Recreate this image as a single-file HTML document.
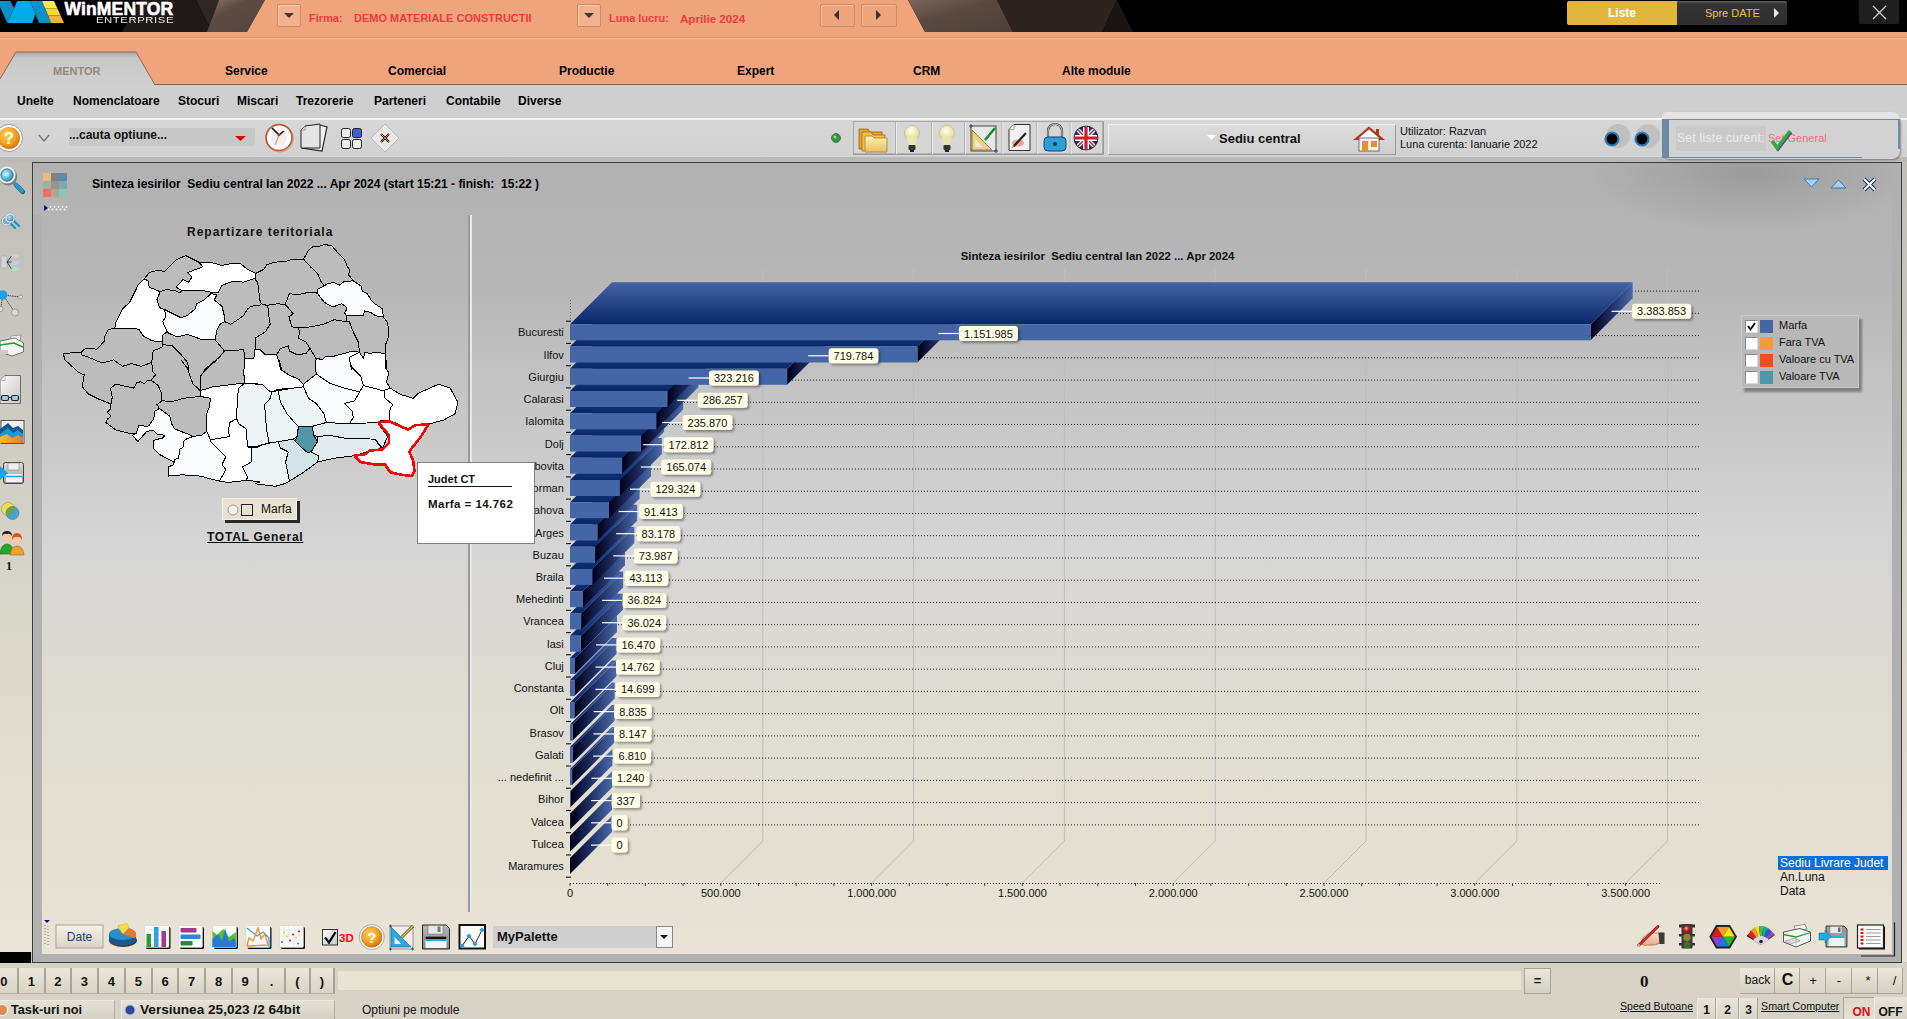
<!DOCTYPE html>
<html><head><meta charset="utf-8">
<style>
*{margin:0;padding:0;box-sizing:border-box}
html,body{width:1907px;height:1019px;overflow:hidden;background:#c8c7c2;font-family:"Liberation Sans", sans-serif}
.a{position:absolute}
.t{position:absolute;white-space:nowrap;line-height:1}
.b{font-weight:bold}
svg{position:absolute;left:0;top:0;overflow:visible}
</style></head><body>
<!-- HEADER -->
<div class="a" style="left:0;top:0;width:1907px;height:32px;background:#000"></div>
<svg width="1907" height="33" style="top:0">
  <defs>
    <linearGradient id="hb1" x1="0" y1="0" x2="1" y2="1"><stop offset="0" stop-color="#8a7264"/><stop offset="0.35" stop-color="#5c4b43"/><stop offset="1" stop-color="#54453e"/></linearGradient>
    <linearGradient id="hb2" x1="0" y1="0" x2="1" y2="1"><stop offset="0" stop-color="#7d6659"/><stop offset="0.4" stop-color="#5a4941"/><stop offset="1" stop-color="#4e4039"/></linearGradient>
  </defs>
  <polygon points="122,32 140,0 196,0 212,32" fill="#1f1a18"/>
  <polygon points="196,0 219,0 207,32 212,32" fill="#2e2623"/>
  <polygon points="219,0 265,0 247,32 207,32" fill="url(#hb1)"/>
  <polygon points="265,0 908,0 925,32 247,32" fill="#f0a47c"/>
  <polygon points="908,0 997,0 1013,32 925,32" fill="url(#hb2)"/>
  <polygon points="997,0 1117,0 1102,32 1013,32" fill="#2d2420"/>
  <polygon points="1117,0 1102,32 1133,32" fill="#1a1512"/>
  <!-- logo -->
  <polygon points="0,1.1 10.3,1.1 14,8.4 7.3,22.9 0,7" fill="#0b8fc7"/>
  <polygon points="17.3,1.1 30.1,1.1 35.3,13.9 32.3,22.9 7.3,22.9" fill="#02abe9"/>
  <polygon points="30.1,1.1 42,1.1 51,22.9 39,22.9 35.3,13.9" fill="#0b8fc7"/>
  <polygon points="42,1.1 54,1.1 57.4,8.6 45.2,8.6" fill="#fde85a"/>
  <polygon points="45.2,8.6 57.4,8.6 60.6,15.6 48.1,15.6" fill="#f6d630"/>
  <polygon points="48.1,15.6 60.6,15.6 64,22.9 51,22.9" fill="#ecb436"/>
</svg>
<div class="t b" style="left:64.5px;top:0.5px;font-size:17.5px;color:#fff;letter-spacing:0.15px;-webkit-text-stroke:0.6px #fff">WinMENTOR</div>
<div class="t" style="left:96px;top:15.5px;font-size:8.7px;color:#ececec;letter-spacing:0.45px;transform:scaleX(1.3);transform-origin:0 0">ENTERPRISE</div>

<!-- header combos -->
<div class="a" style="left:277px;top:4px;width:24px;height:23px;background:#f3b08c;border:1px solid #c98c6c;border-radius:2px;box-shadow:inset 1px 1px 0 #f8c8aa"></div>
<svg width="10" height="6" style="left:284px;top:13px"><polygon points="0,0 10,0 5,5" fill="#3a3a3a"/></svg>
<div class="t b" style="left:309px;top:12.5px;font-size:11px;color:#ee3c3c">Firma:</div>
<div class="t b" style="left:354px;top:12.5px;font-size:11px;color:#ee3c3c">DEMO MATERIALE CONSTRUCTII</div>
<div class="a" style="left:577px;top:4px;width:24px;height:23px;background:#f3b08c;border:1px solid #c98c6c;border-radius:2px;box-shadow:inset 1px 1px 0 #f8c8aa"></div>
<svg width="10" height="6" style="left:584px;top:13px"><polygon points="0,0 10,0 5,5" fill="#3a3a3a"/></svg>
<div class="t b" style="left:609px;top:12.5px;font-size:11px;color:#ee3c3c">Luna lucru:</div>
<div class="t b" style="left:680px;top:12.6px;font-size:11.6px;color:#ee3c3c">Aprilie 2024</div>
<div class="a" style="left:820px;top:4px;width:35px;height:23px;background:#f0a47c;border:1px solid #c98c6c;border-radius:2px;box-shadow:inset 1px 1px 0 #f6bc9c"></div>
<svg width="6" height="10" style="left:834px;top:10px"><polygon points="5,0 5,10 0,5" fill="#333"/></svg>
<div class="a" style="left:861px;top:4px;width:36px;height:23px;background:#f0a47c;border:1px solid #c98c6c;border-radius:2px;box-shadow:inset 1px 1px 0 #f6bc9c"></div>
<svg width="6" height="10" style="left:876px;top:10px"><polygon points="0,0 0,10 5,5" fill="#333"/></svg>

<!-- Liste / Spre DATE -->
<div class="a" style="left:1567px;top:1px;width:110px;height:24px;background:#e1b53e;border-radius:2px 0 0 2px"></div>
<div class="t b" style="left:1567px;top:7px;width:110px;text-align:center;font-size:12px;color:#fff">Liste</div>
<div class="a" style="left:1677px;top:1px;width:110px;height:24px;background:linear-gradient(#5a5a5a,#333 15%,#2e2e2e);border-radius:0 2px 2px 0"></div>
<div class="t" style="left:1705px;top:7.5px;font-size:11px;color:#eac24a">Spre DATE</div>
<svg width="6" height="10" style="left:1774px;top:8px"><polygon points="0,0 0,10 5,5" fill="#e8e8e8"/></svg>
<div class="a" style="left:1859px;top:0;width:40px;height:24px;background:#1f1f1f;border-radius:0 0 2px 2px"></div>
<svg width="16" height="16" style="left:1872px;top:5px"><path d="M1,1 L14,14 M14,1 L1,14" stroke="#cfcfcf" stroke-width="1.3"/></svg>

<!-- orange band -->
<div class="a" style="left:0;top:32px;width:1907px;height:53px;background:#f0a47c"></div>
<div class="a" style="left:0;top:37px;width:1907px;height:1px;background:#d7916d"></div>
<div class="a" style="left:0;top:38px;width:1907px;height:1px;background:#f5b898"></div>
<div class="a" style="left:0;top:84px;width:1907px;height:1.5px;background:#80604e"></div>
<svg width="160" height="36" style="left:0;top:51px">
  <defs><linearGradient id="tabg" x1="0" y1="0" x2="0" y2="1"><stop offset="0" stop-color="#a8a8a8"/><stop offset="0.18" stop-color="#c8c8c8"/><stop offset="1" stop-color="#cfcfcf"/></linearGradient></defs>
  <polygon points="16,1 136,1 155,34 0,34 0,28" fill="url(#tabg)"/>
  <path d="M0,28 L16,1 L136,1 L155,34" fill="none" stroke="#8c6a58" stroke-width="1"/>
</svg>
<div class="t b" style="left:53px;top:66px;font-size:11px;color:#8f8a80">MENTOR</div>
<div class="t b" style="left:225px;top:65px;font-size:12px;color:#000">Service</div>
<div class="t b" style="left:388px;top:65px;font-size:12px;color:#000">Comercial</div>
<div class="t b" style="left:559px;top:65px;font-size:12px;color:#000">Productie</div>
<div class="t b" style="left:737px;top:65px;font-size:12px;color:#000">Expert</div>
<div class="t b" style="left:913px;top:65px;font-size:12px;color:#000">CRM</div>
<div class="t b" style="left:1062px;top:65px;font-size:12px;color:#000">Alte module</div>

<!-- submenu -->
<div class="a" style="left:0;top:85px;width:1907px;height:33px;background:#cfcfcf"></div>
<div class="a" style="left:0;top:118px;width:1907px;height:2px;background:#f2f2f2"></div>
<div class="t b" style="left:17px;top:95px;font-size:12px">Unelte</div>
<div class="t b" style="left:73px;top:95px;font-size:12px">Nomenclatoare</div>
<div class="t b" style="left:178px;top:95px;font-size:12px">Stocuri</div>
<div class="t b" style="left:237px;top:95px;font-size:12px">Miscari</div>
<div class="t b" style="left:296px;top:95px;font-size:12px">Trezorerie</div>
<div class="t b" style="left:374px;top:95px;font-size:12px">Parteneri</div>
<div class="t b" style="left:446px;top:95px;font-size:12px">Contabile</div>
<div class="t b" style="left:518px;top:95px;font-size:12px">Diverse</div>

<!-- TOOLBAR -->
<div class="a" style="left:0;top:120px;width:1907px;height:37px;background:linear-gradient(#d6d6d6,#d2d2d2)"></div>
<div class="a" style="left:0;top:157px;width:1907px;height:5px;background:#b9b9b7"></div>
<svg width="420" height="40" style="left:0;top:118px">
  <defs>
    <radialGradient id="hq" cx="0.4" cy="0.35" r="0.7"><stop offset="0" stop-color="#ffd15a"/><stop offset="0.6" stop-color="#f0a020"/><stop offset="1" stop-color="#c87010"/></radialGradient>
  </defs>
  <circle cx="9" cy="20" r="13.5" fill="#fff" stroke="#9a9a9a" stroke-width="1"/>
  <circle cx="9" cy="20" r="11" fill="url(#hq)"/>
  <text x="9" y="26" font-family="Liberation Sans" font-weight="bold" font-size="16" fill="#fff" text-anchor="middle">?</text>
  <path d="M39,17 L44,23 L49,17" fill="none" stroke="#707070" stroke-width="1.2"/>
  <rect x="69" y="10" width="186" height="18" fill="#c8c8c8"/>
  <polygon points="235,18 246,18 240.5,23" fill="#e00000"/>
  <!-- clock -->
  <circle cx="279" cy="19.5" r="13" fill="#fff" stroke="#c8582a" stroke-width="1.6"/>
  <circle cx="280" cy="20.5" r="13.5" fill="none" stroke="#5a3a2a" stroke-width="0.6" opacity="0.5"/>
  <circle cx="279" cy="19.5" r="8" fill="#efefef"/>
  <path d="M272,10 L279,17 L284,13" fill="none" stroke="#111" stroke-width="1.6"/>
  <path d="M279,17 L275,27" stroke="#e06030" stroke-width="0.8"/>
  <circle cx="279" cy="17" r="1.3" fill="#d02020"/>
  <!-- docs -->
  <polygon points="307,10 320,7 327,9 322,33 302,30" fill="#f0f0f0" stroke="#222" stroke-width="1.2"/>
  <polygon points="305,8 320,6 320,30 301,30 301,12" fill="#e4e4e4" stroke="#222" stroke-width="1"/>
  <polygon points="301,12 305,8 305,12" fill="#fff" stroke="#555" stroke-width="0.6"/>
  <!-- grid -->
  <rect x="341.5" y="10.5" width="9" height="9" rx="2" fill="#eee" stroke="#222" stroke-width="1"/>
  <rect x="352.5" y="10.5" width="9" height="9" rx="2" fill="#3a5fd8" stroke="#222" stroke-width="1"/>
  <rect x="341.5" y="21.5" width="9" height="9" rx="2" fill="#eee" stroke="#222" stroke-width="1"/>
  <rect x="352.5" y="21.5" width="9" height="9" rx="2" fill="#eee" stroke="#222" stroke-width="1"/>
  <!-- diamond -->
  <polygon points="385,6 399,20 385,34 371,20" fill="#e8e8e8" stroke="#bbb" stroke-width="1"/>
  <path d="M381,16 L389,24 M389,16 L381,24" stroke="#111" stroke-width="2.2"/>
  <path d="M381,16 L389,24 M389,16 L381,24" stroke="#f0a020" stroke-width="0.8"/>
</svg>
<div class="t b" style="left:69px;top:129px;font-size:12px;color:#111">...cauta optiune...</div>

<!-- center group -->
<svg width="560" height="42" style="left:820px;top:116px">
  <defs>
    <radialGradient id="bulb" cx="0.45" cy="0.35" r="0.6"><stop offset="0" stop-color="#fffde8"/><stop offset="1" stop-color="#e2dc98"/></radialGradient>
    <linearGradient id="fold" x1="0" y1="0" x2="0" y2="1"><stop offset="0" stop-color="#fff2b0"/><stop offset="1" stop-color="#e8c060"/></linearGradient>
    <radialGradient id="ukb" cx="0.5" cy="0.5" r="0.5"><stop offset="0.8" stop-color="#233a8a"/><stop offset="1" stop-color="#101c50"/></radialGradient>
  </defs>
  <circle cx="16" cy="22" r="4.5" fill="#2b9a3b" stroke="#6a6a6a" stroke-width="1"/>
  <circle cx="15" cy="21" r="1.5" fill="#8fe08f"/>
  <rect x="33.5" y="5.5" width="250" height="33" fill="#d6d6d6" stroke="#a8a8a8"/>
  <path d="M34,38 L283,38 L283,6" stroke="#8a8a8a" fill="none"/>
  <path d="M75.5,6 V38 M111.5,6 V38 M144.5,6 V38 M182,6 V38 M216.8,6 V38 M250.2,6 V38" stroke="#b0b0b0"/>
  <path d="M76.5,6 V38 M112.5,6 V38 M145.5,6 V38 M183,6 V38 M217.8,6 V38 M251.2,6 V38" stroke="#ececec"/>
  <!-- folder -->
  <path d="M39,13 h9 l2,3 h12 v17 h-23z" fill="#e8a030" stroke="#a06010" stroke-width="0.8"/>
  <path d="M42,16 h9 l2,3 h12 v16 h-23z" fill="#f0c050" stroke="#a07020" stroke-width="0.8"/>
  <path d="M45,20 h7 l2,2 h13 v14 h-22z" fill="url(#fold)" stroke="#a08030" stroke-width="0.8"/>
  <!-- bulbs -->
  <g>
    <circle cx="92" cy="17" r="7.5" fill="url(#bulb)" stroke="#b8b070" stroke-width="0.6"/>
    <path d="M87,22 L89,29 H95 L97,22z" fill="#ebe5b0"/>
    <rect x="88.5" y="29" width="7" height="5" rx="1" fill="#333"/>
    <rect x="90" y="34" width="4" height="2" fill="#222"/>
  </g>
  <g>
    <circle cx="127" cy="17" r="7.5" fill="url(#bulb)" stroke="#b8b070" stroke-width="0.6"/>
    <path d="M122,22 L124,29 H130 L132,22z" fill="#ebe5b0"/>
    <rect x="123.5" y="29" width="7" height="5" rx="1" fill="#333"/>
    <rect x="125" y="34" width="4" height="2" fill="#222"/>
  </g>
  <!-- ruler -->
  <rect x="151" y="10" width="25" height="25" fill="#e8e8e8" stroke="#444" stroke-width="1"/>
  <polygon points="152,14 152,34 172,34" fill="#eed27a" stroke="#8a7020" stroke-width="0.8"/>
  <polygon points="155,23 155,31 163,31" fill="#e8e8e8"/>
  <path d="M165,24 L175,12" stroke="#1a8a2a" stroke-width="2.5"/>
  <path d="M149,10 h4 M151,8 v4 M174,35 h4 M176,33 v4" stroke="#2a4a6a" stroke-width="1"/>
  <!-- doc pen -->
  <polygon points="194,8.5 210,8.5 210,34.5 189,34.5 189,13.5" fill="#f2f2f2" stroke="#333" stroke-width="1"/>
  <polygon points="189,13.5 194,8.5 194,13.5" fill="#fff" stroke="#777" stroke-width="0.6"/>
  <ellipse cx="198" cy="27" rx="6" ry="3.5" fill="#e8a090"/>
  <path d="M193.5,30.5 L206,17" stroke="#222" stroke-width="2.2"/>
  <path d="M192,32 L194,30" stroke="#f09030" stroke-width="1.5"/>
  <!-- lock -->
  <path d="M228,22 V15 a7,7 0 0 1 14,0 V22" fill="none" stroke="#333" stroke-width="2.2"/>
  <path d="M228,22 V15 a7,7 0 0 1 14,0 V22" fill="none" stroke="#d8d8d8" stroke-width="1"/>
  <rect x="224" y="21" width="22" height="14" rx="4" fill="#2aa0d8" stroke="#17407a" stroke-width="1"/>
  <circle cx="235" cy="28" r="2" fill="#333"/>
  <!-- UK -->
  <circle cx="266" cy="22" r="12" fill="url(#ukb)"/>
  <clipPath id="ukc"><circle cx="266" cy="22" r="11.5"/></clipPath>
  <g clip-path="url(#ukc)">
    <path d="M254,10 L278,34 M278,10 L254,34" stroke="#fff" stroke-width="4"/>
    <path d="M254,10 L278,34 M278,10 L254,34" stroke="#c8202a" stroke-width="1.5"/>
    <path d="M266,9 V35 M253,22 H279" stroke="#fff" stroke-width="6"/>
    <path d="M266,9 V35 M253,22 H279" stroke="#c8202a" stroke-width="3.2"/>
  </g>
  <circle cx="266" cy="22" r="12" fill="none" stroke="#333" stroke-width="0.8"/>
</svg>
<!-- sediu central -->
<div class="a" style="left:1108px;top:124px;width:288px;height:31px;background:linear-gradient(#dcdcdc,#cfcfcf);border:1px solid #9a9a9a;border-top-color:#eee;border-left-color:#eee"></div>
<svg width="10" height="6" style="left:1207px;top:135px"><polygon points="0,0 9,0 4.5,5" fill="#fff"/></svg>
<div class="t b" style="left:1219px;top:132px;font-size:13px;color:#111">Sediu central</div>
<svg width="34" height="30" style="left:1353px;top:124px">
  <polygon points="3,15 16,4 29,15" fill="#fff" stroke="#b03818" stroke-width="2.2"/>
  <rect x="6" y="14" width="20" height="13" fill="#f8f4ea" stroke="#555" stroke-width="0.8"/>
  <rect x="9" y="17" width="6" height="10" fill="#e8902a"/>
  <rect x="18" y="17" width="6" height="6" fill="#e8902a"/>
  <rect x="23" y="5" width="3" height="6" fill="#b03818"/>
</svg>
<div class="t" style="left:1400px;top:126px;font-size:11px;color:#111">Utilizator: Razvan</div>
<div class="t" style="left:1400px;top:139px;font-size:11px;color:#111">Luna curenta: Ianuarie 2022</div>
<svg width="60" height="30" style="left:1598px;top:124px">
  <circle cx="20" cy="12" r="12" fill="#c0c0c0"/>
  <circle cx="50" cy="12" r="12" fill="#c0c0c0"/>
  <circle cx="14" cy="15" r="6.5" fill="#000" stroke="#2a7ab8" stroke-width="2.2"/>
  <circle cx="44" cy="15" r="6.5" fill="#000" stroke="#2a7ab8" stroke-width="2.2"/>
</svg>
<!-- set liste popup -->
<div class="a" style="left:1662px;top:112px;width:238px;height:47px;background:#d2d2d2;border-radius:8px 11px 8px 8px;box-shadow:1px 1px 2px rgba(0,0,0,0.35)"></div>
<div class="a" style="left:1662px;top:112px;width:238px;height:7px;background:#e4e4e4;border-radius:8px 11px 0 0"></div>
<div class="a" style="left:1662px;top:119px;width:238px;height:1px;background:#6a8ea8"></div>
<div class="a" style="left:1662px;top:119px;width:7px;height:39px;background:#6a8aa2"></div>
<div class="a" style="left:1898px;top:119px;width:1.5px;height:30px;background:#6a8ea8"></div>
<div class="a" style="left:1662px;top:157px;width:200px;height:1px;background:#6a8aa2"></div>
<div class="a" style="left:1676px;top:126px;width:90px;height:25px;background:#cacaca"></div>
<div class="t" style="left:1677px;top:132px;font-size:12px;color:#ececec;letter-spacing:0.3px">Set liste curent:</div>
<div class="t" style="left:1768px;top:132.5px;font-size:11px;color:#f07080">Set General</div>
<svg width="24" height="24" style="left:1769px;top:127px">
  <path d="M3,14 L8,21 L21,4" fill="none" stroke="#3a5a8a" stroke-width="3.2" transform="translate(1,1)"/>
  <path d="M3,14 L8,21 L21,4" fill="none" stroke="#3aa83a" stroke-width="3.2"/>
</svg>

<!-- WINDOW -->
<div class="a" style="left:0;top:162px;width:32px;height:790px;background:linear-gradient(#bebdb8,#d6d3c8 50%,#ebe6d7)"></div>
<div class="a" style="left:1902px;top:162px;width:5px;height:800px;background:linear-gradient(#bebdb8,#d6d3c8 50%,#e6e1d2)"></div>
<div class="a" style="left:32px;top:162px;width:1870px;height:801px;background:#3c3c3c"></div>
<div class="a" style="left:33px;top:163px;width:1868px;height:799px;background:linear-gradient(#b1b1b1 0px,#b4b4b4 60px,#b7b7b7 130px,#c4c4c4 227px,#d6d6d6 387px,#dedbd2 537px,#e4e0d1 690px,#e9e4d5 799px)"></div>
<div class="a" style="left:33px;top:954px;width:1868px;height:8px;background:#b0b0b0"></div>
<div class="a" style="left:1892px;top:163px;width:9px;height:799px;background:#b0b0b0"></div>
<div class="a" style="left:33px;top:215px;width:9px;height:739px;background:linear-gradient(#b0b0b0,#b2b2b2)"></div>

<div class="a" style="left:1560px;top:163px;width:332px;height:110px;background:radial-gradient(ellipse 160px 60px at 190px 10px,rgba(0,0,0,0.13),rgba(0,0,0,0) 100%)"></div>
<svg width="30" height="45" style="left:42px;top:172px"><rect x="1" y="1" width="8" height="8" fill="#e8bb7a"/><rect x="9" y="1" width="8" height="8" fill="#808080"/><rect x="17" y="1" width="8" height="8" fill="#5a8ab0"/><rect x="1" y="9" width="8" height="8" fill="#9cb0a8"/><rect x="9" y="9" width="8" height="8" fill="#9a9488"/><rect x="17" y="9" width="8" height="8" fill="#7aaab0"/><rect x="1" y="17" width="8" height="8" fill="#ee6e66"/><rect x="9" y="17" width="8" height="8" fill="#aca696"/><rect x="17" y="17" width="8" height="8" fill="#8ec4bc"/><polygon points="2,33 2,39 6,36" fill="#101080"/><circle cx="8.5" cy="35" r="0.9" fill="#f4f4f4"/><circle cx="6.5" cy="37.5" r="0.9" fill="#f4f4f4"/><circle cx="12.5" cy="35" r="0.9" fill="#f4f4f4"/><circle cx="10.5" cy="37.5" r="0.9" fill="#f4f4f4"/><circle cx="16.5" cy="35" r="0.9" fill="#f4f4f4"/><circle cx="14.5" cy="37.5" r="0.9" fill="#f4f4f4"/><circle cx="20.5" cy="35" r="0.9" fill="#f4f4f4"/><circle cx="18.5" cy="37.5" r="0.9" fill="#f4f4f4"/><circle cx="24.5" cy="35" r="0.9" fill="#f4f4f4"/><circle cx="22.5" cy="37.5" r="0.9" fill="#f4f4f4"/></svg>
<div class="t b" style="left:92px;top:178px;font-size:12px;color:#000">Sinteza iesirilor&nbsp; Sediu central Ian 2022 ... Apr 2024 (start 15:21 - finish:&nbsp; 15:22 )</div>
<svg width="80" height="20" style="left:1800px;top:176px">
<polygon points="4,3 19,3 11.5,11" fill="#a8cff0" stroke="#3a78b8" stroke-width="1"/>
<polygon points="31,12 46,12 38.5,4" fill="#a8cff0" stroke="#3a78b8" stroke-width="1"/>
<path d="M64,3 L75,14 M75,3 L64,14" stroke="#1a2a5a" stroke-width="4"/>
<path d="M64,3 L75,14 M75,3 L64,14" stroke="#fff" stroke-width="2"/>
</svg>
<div class="a" style="left:468px;top:215px;width:2px;height:697px;background:#9a9a9a"></div>
<div class="a" style="left:470px;top:215px;width:2px;height:697px;background:#e8e8e8"></div>
<!-- SIDEBAR ICONS -->
<svg width="32" height="420" style="left:0;top:160px">
  <defs>
    <radialGradient id="lens" cx="0.4" cy="0.4" r="0.6"><stop offset="0" stop-color="#b8e4f0"/><stop offset="0.7" stop-color="#5ab4d0"/><stop offset="1" stop-color="#2a88b0"/></radialGradient>
    <linearGradient id="fl" x1="0" y1="0" x2="0" y2="1"><stop offset="0" stop-color="#ddd"/><stop offset="1" stop-color="#999"/></linearGradient>
    <linearGradient id="docg" x1="0" y1="0" x2="1" y2="1"><stop offset="0" stop-color="#fafafa"/><stop offset="1" stop-color="#c8c8c8"/></linearGradient>
    <linearGradient id="areao" x1="0" y1="0" x2="1" y2="0"><stop offset="0" stop-color="#f8c020"/><stop offset="1" stop-color="#e87830"/></linearGradient>
  </defs>
  <!-- big magnifier -->
  <path d="M15,24 L22,31" stroke="#222" stroke-width="4.5" stroke-linecap="round" transform="translate(0.8,0.8)" opacity="0.7"/>
  <path d="M15,24 L22,31" stroke="#1aa0e0" stroke-width="3.6" stroke-linecap="round"/>
  <circle cx="7.5" cy="15.5" r="9" fill="#555" opacity="0.6" transform="translate(0.7,0.9)"/>
  <circle cx="7" cy="15" r="8.6" fill="#f0f0f0"/>
  <circle cx="7" cy="15" r="6.2" fill="url(#lens)" stroke="#1a7aa0" stroke-width="0.8"/>
  <ellipse cx="6" cy="14" rx="3" ry="2" fill="#d8f0f8" opacity="0.6"/>
  <!-- small magnifiers -->
  <path d="M10,63 L15,68 M14,61 L19,66" stroke="#1a98d8" stroke-width="2.4" stroke-linecap="round"/>
  <circle cx="6.5" cy="61" r="5" fill="#eee" stroke="#777" stroke-width="0.5"/>
  <circle cx="6.5" cy="61" r="3.5" fill="#6ab0d0"/>
  <circle cx="10" cy="58" r="5" fill="#f4f4f4" stroke="#777" stroke-width="0.5"/>
  <circle cx="10" cy="58" r="3.5" fill="url(#lens)"/>
  <!-- tree list -->
  <rect x="1" y="96" width="6" height="12" rx="1" fill="#d4d4e0" stroke="#999" stroke-width="0.5"/>
  <path d="M7,102 L11.5,96 M7,102 H11.5 M7,102 L11.5,109" fill="none" stroke="#222" stroke-width="0.8"/>
  <rect x="11.5" y="94" width="8" height="4" rx="2" fill="#e4c4d4"/>
  <rect x="11.5" y="101" width="8" height="4" rx="2" fill="#b8d4e8"/>
  <rect x="11.5" y="107" width="8" height="4" rx="2" fill="#b8dcc0"/>
  <!-- network -->
  <path d="M3,135 L20.5,137 M3,135 L0.5,149 M3,135 L15,152.5" stroke="#333" stroke-width="0.9" stroke-dasharray="1.5,0.8"/>
  <circle cx="2.5" cy="135" r="4.8" fill="#18a0e8"/>
  <circle cx="20.5" cy="137" r="2" fill="#e0e0e0" stroke="#777" stroke-width="0.6"/>
  <circle cx="0.5" cy="149" r="2.6" fill="#e0e0e0" stroke="#777" stroke-width="0.6"/>
  <circle cx="15" cy="152.5" r="3.6" fill="#d8d8d8" stroke="#777" stroke-width="0.6"/>
  <!-- printer -->
  <polygon points="11,176 21,175 20,181 10,182" fill="#f4f4f4" stroke="#777" stroke-width="0.6"/>
  <polygon points="0,181 15,178 23.5,183 23.5,192 12,196 0,192" fill="#f4f4f4" stroke="#555" stroke-width="0.8"/>
  <path d="M0,185 L14,183 L23,187" fill="none" stroke="#20a020" stroke-width="1.4"/>
  <rect x="0" y="190" width="8" height="4" fill="#ccc"/>
  <!-- doc glasses -->
  <polygon points="5,215.5 20.5,215.5 20.5,243.5 0,243.5 0,220.5" fill="url(#docg)" stroke="#555" stroke-width="0.8"/>
  <polygon points="0,220.5 5,215.5 5,220.5" fill="#fff" stroke="#888" stroke-width="0.5"/>
  <rect x="1.5" y="235.5" width="7" height="5" rx="1.5" fill="#9cd0e0" stroke="#222" stroke-width="1.2"/>
  <rect x="11.5" y="235.5" width="7" height="5" rx="1.5" fill="#9cd0e0" stroke="#222" stroke-width="1.2"/>
  <path d="M8.5,237.5 H11.5" stroke="#222" stroke-width="1"/>
  <!-- area chart -->
  <rect x="1" y="260.5" width="23" height="23" fill="#f0f0f0" stroke="#333" stroke-width="0.8"/>
  <polygon points="0,272 8,266 13,271 18,269 23,273 23,283 0,283" fill="#1a98d8"/>
  <polygon points="0,269 8,263 13,268 18,266 23,270 23,274 18,270 13,273 8,268 0,274" fill="#0e5a90"/>
  <polygon points="0,277 7,274 12,278 18,275 23,278 23,283 0,283" fill="url(#areao)"/>
  <!-- floppy -->
  <rect x="3.5" y="302.5" width="20" height="21" rx="2" fill="url(#fl)" stroke="#333" stroke-width="0.9"/>
  <rect x="8" y="303" width="11" height="7" fill="#eee" stroke="#777" stroke-width="0.5"/>
  <rect x="6" y="314" width="16" height="8" fill="#f4f4f4"/>
  <path d="M6,316.5 H22" stroke="#20a0e0" stroke-width="1.5"/>
  <path d="M0,306 L8,313 L0,320z" fill="#1aa0e0"/>
  <!-- circles -->
  <circle cx="8" cy="349" r="6.5" fill="#f0e050" stroke="#888" stroke-width="0.6"/>
  <circle cx="12.5" cy="353" r="6.5" fill="#28a0d8" opacity="0.85" stroke="#555" stroke-width="0.6"/>
  <path d="M6.5,353 A6.5,6.5 0 0 1 14,346.5 A6.5,6.5 0 0 1 8,355.5z" fill="#70a040" opacity="0.9"/>
  <!-- people -->
  <path d="M0,394 Q1,384 7,384 Q13,384 14,394z" fill="#20a828" stroke="#186818" stroke-width="0.6"/>
  <circle cx="7" cy="377" r="5" fill="#f4c8a8"/>
  <path d="M2,376 Q2,371 7,371 Q12,371 12,376 Q10,373 7,374 Q4,373 2,376z" fill="#222"/>
  <path d="M10,395 Q11,386 17,386 Q23,386 24,395z" fill="#f0a030" stroke="#a06010" stroke-width="0.6"/>
  <circle cx="17" cy="380" r="5" fill="#f4c8a8"/>
  <path d="M12,380 Q12,373 17,373 Q22,373 22,380 Q20,376 17,377 Q14,376 12,380z" fill="#e05018"/>
</svg>
<div class="t b" style="left:6px;top:560px;font-size:12px;font-family:'Liberation Serif',serif;color:#111">1</div>

<svg width="1907" height="1019" style="left:0;top:0">
<defs>
<linearGradient id="topg" x1="0" y1="0" x2="0" y2="1"><stop offset="0" stop-color="#4464a4"/><stop offset="1" stop-color="#08266a"/></linearGradient>
<linearGradient id="sideg" x1="0" y1="0" x2="1" y2="0"><stop offset="0" stop-color="#000018"/><stop offset="0.45" stop-color="#1c2c60"/><stop offset="1" stop-color="#4a68a8"/></linearGradient>
<filter id="lsh" x="-20%" y="-20%" width="150%" height="160%"><feGaussianBlur in="SourceAlpha" stdDeviation="1"/><feOffset dx="1.5" dy="2" result="o"/><feComponentTransfer><feFuncA type="linear" slope="0.35"/></feComponentTransfer><feMerge><feMergeNode/><feMergeNode in="SourceGraphic"/></feMerge></filter>
</defs>
<text x="1097.5" y="260" font-family="Liberation Sans" font-weight="bold" font-size="11.4" text-anchor="middle" fill="#111">Sinteza iesirilor&#160; Sediu central Ian 2022 ... Apr 2024</text>
<line x1="762.8" y1="269" x2="762.8" y2="841" stroke="#bdbdbd" stroke-width="1"/>
<line x1="720.8" y1="883" x2="762.8" y2="841" stroke="#bbbbbb" stroke-width="1"/>
<line x1="913.6" y1="269" x2="913.6" y2="841" stroke="#bdbdbd" stroke-width="1"/>
<line x1="871.6" y1="883" x2="913.6" y2="841" stroke="#bbbbbb" stroke-width="1"/>
<line x1="1064.4" y1="269" x2="1064.4" y2="841" stroke="#bdbdbd" stroke-width="1"/>
<line x1="1022.4" y1="883" x2="1064.4" y2="841" stroke="#bbbbbb" stroke-width="1"/>
<line x1="1215.2" y1="269" x2="1215.2" y2="841" stroke="#bdbdbd" stroke-width="1"/>
<line x1="1173.2" y1="883" x2="1215.2" y2="841" stroke="#bbbbbb" stroke-width="1"/>
<line x1="1366.0" y1="269" x2="1366.0" y2="841" stroke="#bdbdbd" stroke-width="1"/>
<line x1="1324.0" y1="883" x2="1366.0" y2="841" stroke="#bbbbbb" stroke-width="1"/>
<line x1="1516.8" y1="269" x2="1516.8" y2="841" stroke="#bdbdbd" stroke-width="1"/>
<line x1="1474.8" y1="883" x2="1516.8" y2="841" stroke="#bbbbbb" stroke-width="1"/>
<line x1="1667.6" y1="269" x2="1667.6" y2="841" stroke="#bdbdbd" stroke-width="1"/>
<line x1="1625.6" y1="883" x2="1667.6" y2="841" stroke="#bbbbbb" stroke-width="1"/>
<line x1="612" y1="291.1" x2="1700" y2="291.1" stroke="#222" stroke-width="1" stroke-dasharray="1,2"/>
<line x1="612" y1="313.3" x2="1700" y2="313.3" stroke="#222" stroke-width="1" stroke-dasharray="1,2"/>
<line x1="612" y1="335.6" x2="1700" y2="335.6" stroke="#222" stroke-width="1" stroke-dasharray="1,2"/>
<line x1="612" y1="357.8" x2="1700" y2="357.8" stroke="#222" stroke-width="1" stroke-dasharray="1,2"/>
<line x1="612" y1="380.1" x2="1700" y2="380.1" stroke="#222" stroke-width="1" stroke-dasharray="1,2"/>
<line x1="612" y1="402.3" x2="1700" y2="402.3" stroke="#222" stroke-width="1" stroke-dasharray="1,2"/>
<line x1="612" y1="424.5" x2="1700" y2="424.5" stroke="#222" stroke-width="1" stroke-dasharray="1,2"/>
<line x1="612" y1="446.8" x2="1700" y2="446.8" stroke="#222" stroke-width="1" stroke-dasharray="1,2"/>
<line x1="612" y1="469.0" x2="1700" y2="469.0" stroke="#222" stroke-width="1" stroke-dasharray="1,2"/>
<line x1="612" y1="491.3" x2="1700" y2="491.3" stroke="#222" stroke-width="1" stroke-dasharray="1,2"/>
<line x1="612" y1="513.5" x2="1700" y2="513.5" stroke="#222" stroke-width="1" stroke-dasharray="1,2"/>
<line x1="612" y1="535.7" x2="1700" y2="535.7" stroke="#222" stroke-width="1" stroke-dasharray="1,2"/>
<line x1="612" y1="558.0" x2="1700" y2="558.0" stroke="#222" stroke-width="1" stroke-dasharray="1,2"/>
<line x1="612" y1="580.2" x2="1700" y2="580.2" stroke="#222" stroke-width="1" stroke-dasharray="1,2"/>
<line x1="612" y1="602.5" x2="1700" y2="602.5" stroke="#222" stroke-width="1" stroke-dasharray="1,2"/>
<line x1="612" y1="624.7" x2="1700" y2="624.7" stroke="#222" stroke-width="1" stroke-dasharray="1,2"/>
<line x1="612" y1="646.9" x2="1700" y2="646.9" stroke="#222" stroke-width="1" stroke-dasharray="1,2"/>
<line x1="612" y1="669.2" x2="1700" y2="669.2" stroke="#222" stroke-width="1" stroke-dasharray="1,2"/>
<line x1="612" y1="691.4" x2="1700" y2="691.4" stroke="#222" stroke-width="1" stroke-dasharray="1,2"/>
<line x1="612" y1="713.7" x2="1700" y2="713.7" stroke="#222" stroke-width="1" stroke-dasharray="1,2"/>
<line x1="612" y1="735.9" x2="1700" y2="735.9" stroke="#222" stroke-width="1" stroke-dasharray="1,2"/>
<line x1="612" y1="758.1" x2="1700" y2="758.1" stroke="#222" stroke-width="1" stroke-dasharray="1,2"/>
<line x1="612" y1="780.4" x2="1700" y2="780.4" stroke="#222" stroke-width="1" stroke-dasharray="1,2"/>
<line x1="612" y1="802.6" x2="1700" y2="802.6" stroke="#222" stroke-width="1" stroke-dasharray="1,2"/>
<line x1="612" y1="824.9" x2="1700" y2="824.9" stroke="#222" stroke-width="1" stroke-dasharray="1,2"/>
<line x1="570.5" y1="300" x2="570.5" y2="322" stroke="#666" stroke-width="1" stroke-dasharray="1,2"/>
<polygon points="570.0,858.1 570.0,874.1 612.0,832.1 612.0,816.1" fill="url(#sideg)"/>
<polygon points="570.0,835.8 570.0,851.8 612.0,809.8 612.0,793.8" fill="url(#sideg)"/>
<polygon points="570.1,813.6 570.1,829.6 612.1,787.6 612.1,771.6" fill="url(#sideg)"/>
<polygon points="570.0,813.6 570.1,813.6 612.1,771.6 612.0,771.6" fill="url(#topg)"/>
<rect x="570.0" y="813.6" width="0.1" height="16.0" fill="#4566a6"/>
<polygon points="570.4,791.3 570.4,807.3 612.4,765.3 612.4,749.3" fill="url(#sideg)"/>
<polygon points="570.0,791.3 570.4,791.3 612.4,749.3 612.0,749.3" fill="url(#topg)"/>
<rect x="570.0" y="791.3" width="0.4" height="16.0" fill="#4566a6"/>
<polygon points="572.1,769.1 572.1,785.1 614.1,743.1 614.1,727.1" fill="url(#sideg)"/>
<polygon points="570.0,769.1 572.1,769.1 614.1,727.1 612.0,727.1" fill="url(#topg)"/>
<rect x="570.0" y="769.1" width="2.1" height="16.0" fill="#4566a6"/>
<polygon points="572.5,746.9 572.5,762.9 614.5,720.9 614.5,704.9" fill="url(#sideg)"/>
<polygon points="570.0,746.9 572.5,746.9 614.5,704.9 612.0,704.9" fill="url(#topg)"/>
<rect x="570.0" y="746.9" width="2.5" height="16.0" fill="#4566a6"/>
<polygon points="572.7,724.6 572.7,740.6 614.7,698.6 614.7,682.6" fill="url(#sideg)"/>
<polygon points="570.0,724.6 572.7,724.6 614.7,682.6 612.0,682.6" fill="url(#topg)"/>
<rect x="570.0" y="724.6" width="2.7" height="16.0" fill="#4566a6"/>
<polygon points="574.4,702.4 574.4,718.4 616.4,676.4 616.4,660.4" fill="url(#sideg)"/>
<polygon points="570.0,702.4 574.4,702.4 616.4,660.4 612.0,660.4" fill="url(#topg)"/>
<rect x="570.0" y="702.4" width="4.4" height="16.0" fill="#4566a6"/>
<polygon points="574.5,680.1 574.5,696.1 616.5,654.1 616.5,638.1" fill="url(#sideg)"/>
<polygon points="570.0,680.1 574.5,680.1 616.5,638.1 612.0,638.1" fill="url(#topg)"/>
<rect x="570.0" y="680.1" width="4.5" height="16.0" fill="#4566a6"/>
<polygon points="575.0,657.9 575.0,673.9 617.0,631.9 617.0,615.9" fill="url(#sideg)"/>
<polygon points="570.0,657.9 575.0,657.9 617.0,615.9 612.0,615.9" fill="url(#topg)"/>
<rect x="570.0" y="657.9" width="5.0" height="16.0" fill="#4566a6"/>
<polygon points="580.9,635.7 580.9,651.7 622.9,609.7 622.9,593.7" fill="url(#sideg)"/>
<polygon points="570.0,635.7 580.9,635.7 622.9,593.7 612.0,593.7" fill="url(#topg)"/>
<rect x="570.0" y="635.7" width="10.9" height="16.0" fill="#4566a6"/>
<polygon points="581.1,613.4 581.1,629.4 623.1,587.4 623.1,571.4" fill="url(#sideg)"/>
<polygon points="570.0,613.4 581.1,613.4 623.1,571.4 612.0,571.4" fill="url(#topg)"/>
<rect x="570.0" y="613.4" width="11.1" height="16.0" fill="#4566a6"/>
<polygon points="583.0,591.2 583.0,607.2 625.0,565.2 625.0,549.2" fill="url(#sideg)"/>
<polygon points="570.0,591.2 583.0,591.2 625.0,549.2 612.0,549.2" fill="url(#topg)"/>
<rect x="570.0" y="591.2" width="13.0" height="16.0" fill="#4566a6"/>
<polygon points="592.3,568.9 592.3,584.9 634.3,542.9 634.3,526.9" fill="url(#sideg)"/>
<polygon points="570.0,568.9 592.3,568.9 634.3,526.9 612.0,526.9" fill="url(#topg)"/>
<rect x="570.0" y="568.9" width="22.3" height="16.0" fill="#4566a6"/>
<polygon points="595.1,546.7 595.1,562.7 637.1,520.7 637.1,504.7" fill="url(#sideg)"/>
<polygon points="570.0,546.7 595.1,546.7 637.1,504.7 612.0,504.7" fill="url(#topg)"/>
<rect x="570.0" y="546.7" width="25.1" height="16.0" fill="#4566a6"/>
<polygon points="597.6,524.5 597.6,540.5 639.6,498.5 639.6,482.5" fill="url(#sideg)"/>
<polygon points="570.0,524.5 597.6,524.5 639.6,482.5 612.0,482.5" fill="url(#topg)"/>
<rect x="570.0" y="524.5" width="27.6" height="16.0" fill="#4566a6"/>
<polygon points="609.0,502.2 609.0,518.2 651.0,476.2 651.0,460.2" fill="url(#sideg)"/>
<polygon points="570.0,502.2 609.0,502.2 651.0,460.2 612.0,460.2" fill="url(#topg)"/>
<rect x="570.0" y="502.2" width="39.0" height="16.0" fill="#4566a6"/>
<polygon points="619.8,480.0 619.8,496.0 661.8,454.0 661.8,438.0" fill="url(#sideg)"/>
<polygon points="570.0,480.0 619.8,480.0 661.8,438.0 612.0,438.0" fill="url(#topg)"/>
<rect x="570.0" y="480.0" width="49.8" height="16.0" fill="#4566a6"/>
<polygon points="622.1,457.7 622.1,473.7 664.1,431.7 664.1,415.7" fill="url(#sideg)"/>
<polygon points="570.0,457.7 622.1,457.7 664.1,415.7 612.0,415.7" fill="url(#topg)"/>
<rect x="570.0" y="457.7" width="52.1" height="16.0" fill="#4566a6"/>
<polygon points="641.1,435.5 641.1,451.5 683.1,409.5 683.1,393.5" fill="url(#sideg)"/>
<polygon points="570.0,435.5 641.1,435.5 683.1,393.5 612.0,393.5" fill="url(#topg)"/>
<rect x="570.0" y="435.5" width="71.1" height="16.0" fill="#4566a6"/>
<polygon points="656.3,413.3 656.3,429.3 698.3,387.3 698.3,371.3" fill="url(#sideg)"/>
<polygon points="570.0,413.3 656.3,413.3 698.3,371.3 612.0,371.3" fill="url(#topg)"/>
<rect x="570.0" y="413.3" width="86.3" height="16.0" fill="#4566a6"/>
<polygon points="667.5,391.0 667.5,407.0 709.5,365.0 709.5,349.0" fill="url(#sideg)"/>
<polygon points="570.0,391.0 667.5,391.0 709.5,349.0 612.0,349.0" fill="url(#topg)"/>
<rect x="570.0" y="391.0" width="97.5" height="16.0" fill="#4566a6"/>
<polygon points="787.1,368.8 787.1,384.8 829.1,342.8 829.1,326.8" fill="url(#sideg)"/>
<polygon points="570.0,368.8 787.1,368.8 829.1,326.8 612.0,326.8" fill="url(#topg)"/>
<rect x="570.0" y="368.8" width="217.1" height="16.0" fill="#4566a6"/>
<polygon points="917.4,346.5 917.4,362.5 959.4,320.5 959.4,304.5" fill="url(#sideg)"/>
<polygon points="570.0,346.5 917.4,346.5 959.4,304.5 612.0,304.5" fill="url(#topg)"/>
<rect x="570.0" y="346.5" width="347.4" height="16.0" fill="#4566a6"/>
<polygon points="1590.6,324.3 1590.6,340.3 1632.6,298.3 1632.6,282.3" fill="url(#sideg)"/>
<polygon points="570.0,324.3 1590.6,324.3 1632.6,282.3 612.0,282.3" fill="url(#topg)"/>
<rect x="570.0" y="324.3" width="1020.6" height="16.0" fill="#4566a6"/>
<line x1="566" y1="321.2" x2="571" y2="321.2" stroke="#111" stroke-width="1.1"/>
<line x1="566" y1="343.4" x2="571" y2="343.4" stroke="#111" stroke-width="1.1"/>
<line x1="566" y1="365.7" x2="571" y2="365.7" stroke="#111" stroke-width="1.1"/>
<line x1="566" y1="387.9" x2="571" y2="387.9" stroke="#111" stroke-width="1.1"/>
<line x1="566" y1="410.2" x2="571" y2="410.2" stroke="#111" stroke-width="1.1"/>
<line x1="566" y1="432.4" x2="571" y2="432.4" stroke="#111" stroke-width="1.1"/>
<line x1="566" y1="454.6" x2="571" y2="454.6" stroke="#111" stroke-width="1.1"/>
<line x1="566" y1="476.9" x2="571" y2="476.9" stroke="#111" stroke-width="1.1"/>
<line x1="566" y1="499.1" x2="571" y2="499.1" stroke="#111" stroke-width="1.1"/>
<line x1="566" y1="521.4" x2="571" y2="521.4" stroke="#111" stroke-width="1.1"/>
<line x1="566" y1="543.6" x2="571" y2="543.6" stroke="#111" stroke-width="1.1"/>
<line x1="566" y1="565.8" x2="571" y2="565.8" stroke="#111" stroke-width="1.1"/>
<line x1="566" y1="588.1" x2="571" y2="588.1" stroke="#111" stroke-width="1.1"/>
<line x1="566" y1="610.3" x2="571" y2="610.3" stroke="#111" stroke-width="1.1"/>
<line x1="566" y1="632.6" x2="571" y2="632.6" stroke="#111" stroke-width="1.1"/>
<line x1="566" y1="654.8" x2="571" y2="654.8" stroke="#111" stroke-width="1.1"/>
<line x1="566" y1="677.0" x2="571" y2="677.0" stroke="#111" stroke-width="1.1"/>
<line x1="566" y1="699.3" x2="571" y2="699.3" stroke="#111" stroke-width="1.1"/>
<line x1="566" y1="721.5" x2="571" y2="721.5" stroke="#111" stroke-width="1.1"/>
<line x1="566" y1="743.8" x2="571" y2="743.8" stroke="#111" stroke-width="1.1"/>
<line x1="566" y1="766.0" x2="571" y2="766.0" stroke="#111" stroke-width="1.1"/>
<line x1="566" y1="788.2" x2="571" y2="788.2" stroke="#111" stroke-width="1.1"/>
<line x1="566" y1="810.5" x2="571" y2="810.5" stroke="#111" stroke-width="1.1"/>
<line x1="566" y1="832.7" x2="571" y2="832.7" stroke="#111" stroke-width="1.1"/>
<line x1="566" y1="855.0" x2="571" y2="855.0" stroke="#111" stroke-width="1.1"/>
<line x1="566" y1="877.2" x2="571" y2="877.2" stroke="#111" stroke-width="1.1"/>
<line x1="570" y1="883.5" x2="1660" y2="883.5" stroke="#222" stroke-width="1" stroke-dasharray="1,2"/>
<line x1="570.0" y1="883" x2="570.0" y2="886" stroke="#444" stroke-width="1"/>
<line x1="607.7" y1="883" x2="607.7" y2="886" stroke="#444" stroke-width="1"/>
<line x1="645.4" y1="883" x2="645.4" y2="886" stroke="#444" stroke-width="1"/>
<line x1="683.1" y1="883" x2="683.1" y2="886" stroke="#444" stroke-width="1"/>
<line x1="720.8" y1="883" x2="720.8" y2="886" stroke="#444" stroke-width="1"/>
<line x1="758.5" y1="883" x2="758.5" y2="886" stroke="#444" stroke-width="1"/>
<line x1="796.2" y1="883" x2="796.2" y2="886" stroke="#444" stroke-width="1"/>
<line x1="833.9" y1="883" x2="833.9" y2="886" stroke="#444" stroke-width="1"/>
<line x1="871.6" y1="883" x2="871.6" y2="886" stroke="#444" stroke-width="1"/>
<line x1="909.3" y1="883" x2="909.3" y2="886" stroke="#444" stroke-width="1"/>
<line x1="947.0" y1="883" x2="947.0" y2="886" stroke="#444" stroke-width="1"/>
<line x1="984.7" y1="883" x2="984.7" y2="886" stroke="#444" stroke-width="1"/>
<line x1="1022.4" y1="883" x2="1022.4" y2="886" stroke="#444" stroke-width="1"/>
<line x1="1060.1" y1="883" x2="1060.1" y2="886" stroke="#444" stroke-width="1"/>
<line x1="1097.8" y1="883" x2="1097.8" y2="886" stroke="#444" stroke-width="1"/>
<line x1="1135.5" y1="883" x2="1135.5" y2="886" stroke="#444" stroke-width="1"/>
<line x1="1173.2" y1="883" x2="1173.2" y2="886" stroke="#444" stroke-width="1"/>
<line x1="1210.9" y1="883" x2="1210.9" y2="886" stroke="#444" stroke-width="1"/>
<line x1="1248.6" y1="883" x2="1248.6" y2="886" stroke="#444" stroke-width="1"/>
<line x1="1286.3" y1="883" x2="1286.3" y2="886" stroke="#444" stroke-width="1"/>
<line x1="1324.0" y1="883" x2="1324.0" y2="886" stroke="#444" stroke-width="1"/>
<line x1="1361.7" y1="883" x2="1361.7" y2="886" stroke="#444" stroke-width="1"/>
<line x1="1399.4" y1="883" x2="1399.4" y2="886" stroke="#444" stroke-width="1"/>
<line x1="1437.1" y1="883" x2="1437.1" y2="886" stroke="#444" stroke-width="1"/>
<line x1="1474.8" y1="883" x2="1474.8" y2="886" stroke="#444" stroke-width="1"/>
<line x1="1512.5" y1="883" x2="1512.5" y2="886" stroke="#444" stroke-width="1"/>
<line x1="1550.2" y1="883" x2="1550.2" y2="886" stroke="#444" stroke-width="1"/>
<line x1="1587.9" y1="883" x2="1587.9" y2="886" stroke="#444" stroke-width="1"/>
<line x1="1625.6" y1="883" x2="1625.6" y2="886" stroke="#444" stroke-width="1"/>
<text x="570.0" y="897" font-family="Liberation Sans" font-size="11" text-anchor="middle" fill="#111">0</text>
<text x="720.8" y="897" font-family="Liberation Sans" font-size="11" text-anchor="middle" fill="#111">500.000</text>
<text x="871.6" y="897" font-family="Liberation Sans" font-size="11" text-anchor="middle" fill="#111">1.000.000</text>
<text x="1022.4" y="897" font-family="Liberation Sans" font-size="11" text-anchor="middle" fill="#111">1.500.000</text>
<text x="1173.2" y="897" font-family="Liberation Sans" font-size="11" text-anchor="middle" fill="#111">2.000.000</text>
<text x="1324.0" y="897" font-family="Liberation Sans" font-size="11" text-anchor="middle" fill="#111">2.500.000</text>
<text x="1474.8" y="897" font-family="Liberation Sans" font-size="11" text-anchor="middle" fill="#111">3.000.000</text>
<text x="1625.6" y="897" font-family="Liberation Sans" font-size="11" text-anchor="middle" fill="#111">3.500.000</text>
<text x="563.8" y="336.3" font-family="Liberation Sans" font-size="11" text-anchor="end" fill="#111">Bucuresti</text>
<text x="563.8" y="358.5" font-family="Liberation Sans" font-size="11" text-anchor="end" fill="#111">Ilfov</text>
<text x="563.8" y="380.8" font-family="Liberation Sans" font-size="11" text-anchor="end" fill="#111">Giurgiu</text>
<text x="563.8" y="403.0" font-family="Liberation Sans" font-size="11" text-anchor="end" fill="#111">Calarasi</text>
<text x="563.8" y="425.3" font-family="Liberation Sans" font-size="11" text-anchor="end" fill="#111">Ialomita</text>
<text x="563.8" y="447.5" font-family="Liberation Sans" font-size="11" text-anchor="end" fill="#111">Dolj</text>
<text x="563.8" y="469.7" font-family="Liberation Sans" font-size="11" text-anchor="end" fill="#111">Dambovita</text>
<text x="563.8" y="492.0" font-family="Liberation Sans" font-size="11" text-anchor="end" fill="#111">Teleorman</text>
<text x="563.8" y="514.2" font-family="Liberation Sans" font-size="11" text-anchor="end" fill="#111">Prahova</text>
<text x="563.8" y="536.5" font-family="Liberation Sans" font-size="11" text-anchor="end" fill="#111">Arges</text>
<text x="563.8" y="558.7" font-family="Liberation Sans" font-size="11" text-anchor="end" fill="#111">Buzau</text>
<text x="563.8" y="580.9" font-family="Liberation Sans" font-size="11" text-anchor="end" fill="#111">Braila</text>
<text x="563.8" y="603.2" font-family="Liberation Sans" font-size="11" text-anchor="end" fill="#111">Mehedinti</text>
<text x="563.8" y="625.4" font-family="Liberation Sans" font-size="11" text-anchor="end" fill="#111">Vrancea</text>
<text x="563.8" y="647.7" font-family="Liberation Sans" font-size="11" text-anchor="end" fill="#111">Iasi</text>
<text x="563.8" y="669.9" font-family="Liberation Sans" font-size="11" text-anchor="end" fill="#111">Cluj</text>
<text x="563.8" y="692.1" font-family="Liberation Sans" font-size="11" text-anchor="end" fill="#111">Constanta</text>
<text x="563.8" y="714.4" font-family="Liberation Sans" font-size="11" text-anchor="end" fill="#111">Olt</text>
<text x="563.8" y="736.6" font-family="Liberation Sans" font-size="11" text-anchor="end" fill="#111">Brasov</text>
<text x="563.8" y="758.9" font-family="Liberation Sans" font-size="11" text-anchor="end" fill="#111">Galati</text>
<text x="563.8" y="781.1" font-family="Liberation Sans" font-size="11" text-anchor="end" fill="#111">... nedefinit ...</text>
<text x="563.8" y="803.3" font-family="Liberation Sans" font-size="11" text-anchor="end" fill="#111">Bihor</text>
<text x="563.8" y="825.6" font-family="Liberation Sans" font-size="11" text-anchor="end" fill="#111">Valcea</text>
<text x="563.8" y="847.8" font-family="Liberation Sans" font-size="11" text-anchor="end" fill="#111">Tulcea</text>
<text x="563.8" y="870.1" font-family="Liberation Sans" font-size="11" text-anchor="end" fill="#111">Maramures</text>
</svg>
<svg width="1907" height="1019" style="left:0;top:0">
<line x1="1611.6" y1="311.3" x2="1632.1" y2="311.3" stroke="#fff" stroke-width="1.2"/>
<rect x="1632.1" y="303.8" width="59.0" height="15" rx="3" fill="#fffde6" filter="url(#lsh)"/>
<text x="1637.1" y="315.3" font-family="Liberation Sans" font-size="11" fill="#111">3.383.853</text>
<line x1="938.4" y1="333.5" x2="958.9" y2="333.5" stroke="#fff" stroke-width="1.2"/>
<rect x="958.9" y="326.0" width="59.0" height="15" rx="3" fill="#fffde6" filter="url(#lsh)"/>
<text x="963.9" y="337.5" font-family="Liberation Sans" font-size="11" fill="#111">1.151.985</text>
<line x1="808.1" y1="355.8" x2="828.6" y2="355.8" stroke="#fff" stroke-width="1.2"/>
<rect x="828.6" y="348.3" width="49.8" height="15" rx="3" fill="#fffde6" filter="url(#lsh)"/>
<text x="833.6" y="359.8" font-family="Liberation Sans" font-size="11" fill="#111">719.784</text>
<line x1="688.5" y1="378.0" x2="709.0" y2="378.0" stroke="#fff" stroke-width="1.2"/>
<rect x="709.0" y="370.5" width="49.8" height="15" rx="3" fill="#fffde6" filter="url(#lsh)"/>
<text x="714.0" y="382.0" font-family="Liberation Sans" font-size="11" fill="#111">323.216</text>
<line x1="677.3" y1="400.3" x2="697.8" y2="400.3" stroke="#fff" stroke-width="1.2"/>
<rect x="697.8" y="392.8" width="49.8" height="15" rx="3" fill="#fffde6" filter="url(#lsh)"/>
<text x="702.8" y="404.3" font-family="Liberation Sans" font-size="11" fill="#111">286.257</text>
<line x1="662.1" y1="422.5" x2="682.6" y2="422.5" stroke="#fff" stroke-width="1.2"/>
<rect x="682.6" y="415.0" width="49.8" height="15" rx="3" fill="#fffde6" filter="url(#lsh)"/>
<text x="687.6" y="426.5" font-family="Liberation Sans" font-size="11" fill="#111">235.870</text>
<line x1="643.1" y1="444.7" x2="663.6" y2="444.7" stroke="#fff" stroke-width="1.2"/>
<rect x="663.6" y="437.2" width="49.8" height="15" rx="3" fill="#fffde6" filter="url(#lsh)"/>
<text x="668.6" y="448.7" font-family="Liberation Sans" font-size="11" fill="#111">172.812</text>
<line x1="640.8" y1="467.0" x2="661.3" y2="467.0" stroke="#fff" stroke-width="1.2"/>
<rect x="661.3" y="459.5" width="49.8" height="15" rx="3" fill="#fffde6" filter="url(#lsh)"/>
<text x="666.3" y="471.0" font-family="Liberation Sans" font-size="11" fill="#111">165.074</text>
<line x1="630.0" y1="489.2" x2="650.5" y2="489.2" stroke="#fff" stroke-width="1.2"/>
<rect x="650.5" y="481.7" width="49.8" height="15" rx="3" fill="#fffde6" filter="url(#lsh)"/>
<text x="655.5" y="493.2" font-family="Liberation Sans" font-size="11" fill="#111">129.324</text>
<line x1="618.6" y1="511.5" x2="639.1" y2="511.5" stroke="#fff" stroke-width="1.2"/>
<rect x="639.1" y="504.0" width="43.7" height="15" rx="3" fill="#fffde6" filter="url(#lsh)"/>
<text x="644.1" y="515.5" font-family="Liberation Sans" font-size="11" fill="#111">91.413</text>
<line x1="616.1" y1="533.7" x2="636.6" y2="533.7" stroke="#fff" stroke-width="1.2"/>
<rect x="636.6" y="526.2" width="43.7" height="15" rx="3" fill="#fffde6" filter="url(#lsh)"/>
<text x="641.6" y="537.7" font-family="Liberation Sans" font-size="11" fill="#111">83.178</text>
<line x1="613.3" y1="555.9" x2="633.8" y2="555.9" stroke="#fff" stroke-width="1.2"/>
<rect x="633.8" y="548.4" width="43.7" height="15" rx="3" fill="#fffde6" filter="url(#lsh)"/>
<text x="638.8" y="559.9" font-family="Liberation Sans" font-size="11" fill="#111">73.987</text>
<line x1="604.0" y1="578.2" x2="624.5" y2="578.2" stroke="#fff" stroke-width="1.2"/>
<rect x="624.5" y="570.7" width="43.7" height="15" rx="3" fill="#fffde6" filter="url(#lsh)"/>
<text x="629.5" y="582.2" font-family="Liberation Sans" font-size="11" fill="#111">43.113</text>
<line x1="602.1" y1="600.4" x2="622.6" y2="600.4" stroke="#fff" stroke-width="1.2"/>
<rect x="622.6" y="592.9" width="43.7" height="15" rx="3" fill="#fffde6" filter="url(#lsh)"/>
<text x="627.6" y="604.4" font-family="Liberation Sans" font-size="11" fill="#111">36.824</text>
<line x1="601.9" y1="622.7" x2="622.4" y2="622.7" stroke="#fff" stroke-width="1.2"/>
<rect x="622.4" y="615.2" width="43.7" height="15" rx="3" fill="#fffde6" filter="url(#lsh)"/>
<text x="627.4" y="626.7" font-family="Liberation Sans" font-size="11" fill="#111">36.024</text>
<line x1="596.0" y1="644.9" x2="616.5" y2="644.9" stroke="#fff" stroke-width="1.2"/>
<rect x="616.5" y="637.4" width="43.7" height="15" rx="3" fill="#fffde6" filter="url(#lsh)"/>
<text x="621.5" y="648.9" font-family="Liberation Sans" font-size="11" fill="#111">16.470</text>
<line x1="595.5" y1="667.1" x2="616.0" y2="667.1" stroke="#fff" stroke-width="1.2"/>
<rect x="616.0" y="659.6" width="43.7" height="15" rx="3" fill="#fffde6" filter="url(#lsh)"/>
<text x="621.0" y="671.1" font-family="Liberation Sans" font-size="11" fill="#111">14.762</text>
<line x1="595.4" y1="689.4" x2="615.9" y2="689.4" stroke="#fff" stroke-width="1.2"/>
<rect x="615.9" y="681.9" width="43.7" height="15" rx="3" fill="#fffde6" filter="url(#lsh)"/>
<text x="620.9" y="693.4" font-family="Liberation Sans" font-size="11" fill="#111">14.699</text>
<line x1="593.7" y1="711.6" x2="614.2" y2="711.6" stroke="#fff" stroke-width="1.2"/>
<rect x="614.2" y="704.1" width="37.5" height="15" rx="3" fill="#fffde6" filter="url(#lsh)"/>
<text x="619.2" y="715.6" font-family="Liberation Sans" font-size="11" fill="#111">8.835</text>
<line x1="593.5" y1="733.9" x2="614.0" y2="733.9" stroke="#fff" stroke-width="1.2"/>
<rect x="614.0" y="726.4" width="37.5" height="15" rx="3" fill="#fffde6" filter="url(#lsh)"/>
<text x="619.0" y="737.9" font-family="Liberation Sans" font-size="11" fill="#111">8.147</text>
<line x1="593.1" y1="756.1" x2="613.6" y2="756.1" stroke="#fff" stroke-width="1.2"/>
<rect x="613.6" y="748.6" width="37.5" height="15" rx="3" fill="#fffde6" filter="url(#lsh)"/>
<text x="618.6" y="760.1" font-family="Liberation Sans" font-size="11" fill="#111">6.810</text>
<line x1="591.4" y1="778.3" x2="611.9" y2="778.3" stroke="#fff" stroke-width="1.2"/>
<rect x="611.9" y="770.8" width="37.5" height="15" rx="3" fill="#fffde6" filter="url(#lsh)"/>
<text x="616.9" y="782.3" font-family="Liberation Sans" font-size="11" fill="#111">1.240</text>
<line x1="591.1" y1="800.6" x2="611.6" y2="800.6" stroke="#fff" stroke-width="1.2"/>
<rect x="611.6" y="793.1" width="28.4" height="15" rx="3" fill="#fffde6" filter="url(#lsh)"/>
<text x="616.6" y="804.6" font-family="Liberation Sans" font-size="11" fill="#111">337</text>
<line x1="591.0" y1="822.8" x2="611.5" y2="822.8" stroke="#fff" stroke-width="1.2"/>
<rect x="611.5" y="815.3" width="16.1" height="15" rx="3" fill="#fffde6" filter="url(#lsh)"/>
<text x="616.5" y="826.8" font-family="Liberation Sans" font-size="11" fill="#111">0</text>
<line x1="591.0" y1="845.1" x2="611.5" y2="845.1" stroke="#fff" stroke-width="1.2"/>
<rect x="611.5" y="837.6" width="16.1" height="15" rx="3" fill="#fffde6" filter="url(#lsh)"/>
<text x="616.5" y="849.1" font-family="Liberation Sans" font-size="11" fill="#111">0</text>
</svg>
<div class="a" style="left:1744px;top:319px;width:118px;height:73px;background:rgba(0,0,0,0.35);filter:blur(1px)"></div>
<div class="a" style="left:1741px;top:315px;width:118px;height:73px;background:#b8b8b8;border:1px solid #c8c8c8"></div>
<div class="a" style="left:1745px;top:320px;width:13px;height:13px;background:#fff;border:1px solid #888;border-right-color:#ddd;border-bottom-color:#ddd"></div>
<svg width="13" height="13" style="left:1745px;top:320px"><path d="M3,6 L5.5,9.5 L10,3" fill="none" stroke="#000" stroke-width="1.8"/></svg>
<div class="a" style="left:1760px;top:320px;width:13px;height:13px;background:#4465a6"></div>
<div class="t" style="left:1779px;top:320px;font-size:11px;color:#111">Marfa</div>
<div class="a" style="left:1745px;top:337px;width:13px;height:13px;background:#fff;border:1px solid #888;border-right-color:#ddd;border-bottom-color:#ddd"></div>
<div class="a" style="left:1760px;top:337px;width:13px;height:13px;background:#f39c38"></div>
<div class="t" style="left:1779px;top:337px;font-size:11px;color:#111">Fara TVA</div>
<div class="a" style="left:1745px;top:354px;width:13px;height:13px;background:#fff;border:1px solid #888;border-right-color:#ddd;border-bottom-color:#ddd"></div>
<div class="a" style="left:1760px;top:354px;width:13px;height:13px;background:#f04e18"></div>
<div class="t" style="left:1779px;top:354px;font-size:11px;color:#111">Valoare cu TVA</div>
<div class="a" style="left:1745px;top:371px;width:13px;height:13px;background:#fff;border:1px solid #888;border-right-color:#ddd;border-bottom-color:#ddd"></div>
<div class="a" style="left:1760px;top:371px;width:13px;height:13px;background:#4a98a8"></div>
<div class="t" style="left:1779px;top:371px;font-size:11px;color:#111">Valoare TVA</div>
<div class="a" style="left:1778px;top:856px;width:110px;height:14px;background:#0a70e0"></div>
<div class="t" style="left:1780px;top:857px;font-size:12px;color:#fff">Sediu Livrare Judet</div>
<div class="t" style="left:1780px;top:871px;font-size:12px;color:#111">An.Luna</div>
<div class="t" style="left:1780px;top:885px;font-size:12px;color:#111">Data</div>
<svg width="1907" height="1019" style="left:0;top:0" shape-rendering="crispEdges">
<polygon points="144.2,278.9 149.3,272.5 156.9,270.6 164.6,271.2 176.1,259.8 185.6,255.6 199.0,262.3 202.9,266.8 187.6,272.5 192.0,277.0 188.8,282.1 183.1,279.5 176.1,287.2 181.8,290.4 179.9,292.9 174.8,290.4 165.9,289.7 160.1,291.7 149.3,287.2 148.0,280.8" fill="#bcbcbc" stroke="#000" stroke-width="1" stroke-linejoin="round"/>
<polygon points="199.0,262.3 213.1,263.0 222.0,265.5 230.9,263.6 240.5,263.6 247.5,269.3 256.4,273.8 255.2,278.3 243.7,282.1 232.2,281.5 222.0,285.3 218.2,292.3 211.1,292.3 205.4,291.0 193.9,290.4 181.8,290.4 176.1,287.2 183.1,279.5 188.8,282.1 192.0,277.0 187.6,272.5 202.9,266.8" fill="#ffffff" stroke="#000" stroke-width="1" stroke-linejoin="round"/>
<polygon points="144.2,278.9 148.0,280.8 149.3,287.2 160.1,291.7 156.9,299.9 159.5,307.6 164.6,309.5 165.9,316.5 162.7,321.6 167.1,331.8 162.0,335.7 162.0,342.0 151.8,340.8 142.9,335.7 139.1,329.3 128.9,328.0 114.8,328.6 116.1,321.6 122.5,308.9 129.5,302.5 136.5,288.5 137.8,285.3" fill="#ffffff" stroke="#000" stroke-width="1" stroke-linejoin="round"/>
<polygon points="160.1,291.7 165.9,289.7 174.8,290.4 179.9,292.9 181.8,290.4 193.9,290.4 205.4,291.0 211.1,292.3 211.1,293.6 204.1,299.9 196.5,303.8 195.2,308.9 187.6,315.3 181.2,317.8 173.5,314.0 164.6,309.5 159.5,307.6 156.9,299.9" fill="#bcbcbc" stroke="#000" stroke-width="1" stroke-linejoin="round"/>
<polygon points="164.6,309.5 173.5,314.0 181.2,317.8 187.6,315.3 195.2,308.9 196.5,303.8 204.1,299.9 211.1,293.6 216.9,294.8 214.3,299.9 222.0,306.3 224.5,316.5 224.5,321.6 220.1,324.2 216.9,330.6 215.0,339.5 201.6,339.5 187.6,334.4 177.3,336.9 168.4,333.1 167.1,331.8 162.7,321.6 165.9,316.5" fill="#f9fbfc" stroke="#000" stroke-width="1" stroke-linejoin="round"/>
<polygon points="218.2,292.3 222.0,285.3 232.2,281.5 243.7,282.1 255.2,278.3 260.0,278.3 255.0,273.8 255.0,279.6 257.6,282.1 258.8,291.0 260.1,301.2 261.4,303.8 260.0,305.1 251.3,306.3 247.5,308.9 243.7,315.3 238.6,319.1 230.9,324.2 224.5,321.6 224.5,316.5 222.0,306.3 214.3,299.9 216.9,294.8 211.1,293.6 211.1,292.3" fill="#bcbcbc" stroke="#000" stroke-width="1" stroke-linejoin="round"/>
<polygon points="81.0,352.2 85.5,348.4 97.0,349.1 104.6,340.8 104.6,336.9 108.5,329.3 114.8,328.6 128.9,328.0 139.1,329.3 142.9,335.7 151.8,340.8 162.0,342.0 162.0,347.1 153.1,351.0 151.8,362.4 141.6,366.3 131.4,363.7 122.5,366.3 113.6,359.9 102.1,363.1 91.9,358.6 81.7,354.8" fill="#bcbcbc" stroke="#000" stroke-width="1" stroke-linejoin="round"/>
<polygon points="63.2,353.5 81.0,352.2 81.7,354.8 91.9,358.6 102.1,363.1 113.6,359.9 122.5,366.3 131.4,363.7 141.6,366.3 151.8,362.4 151.8,361.9 152.5,371.5 155.7,374.7 151.8,379.1 151.2,380.4 146.7,381.0 144.2,383.6 140.4,381.7 136.5,383.0 134.0,388.1 127.6,386.8 119.9,384.9 115.5,384.2 110.4,388.7 112.3,397.0 111.0,404.0 98.3,398.9 88.1,393.8 82.3,386.8 84.2,374.7 79.1,372.8 65.1,360.0 65.1,360.5" fill="#bcbcbc" stroke="#000" stroke-width="1" stroke-linejoin="round"/>
<polygon points="111.0,404.0 112.3,397.0 110.4,388.7 115.5,384.2 119.9,384.9 127.6,386.8 134.0,388.1 136.5,383.0 140.4,381.7 144.2,383.6 146.7,381.0 151.2,380.4 158.2,385.5 161.4,393.2 162.0,400.8 156.9,404.6 159.5,408.5 155.0,411.0 153.8,418.7 149.3,425.1 146.7,427.0 141.6,425.1 139.1,425.1 137.2,430.2 136.5,433.3 132.7,434.0 116.1,430.2 105.9,422.5 107.2,419.3 111.0,416.1 107.2,412.3 110.4,409.1" fill="#bcbcbc" stroke="#000" stroke-width="1" stroke-linejoin="round"/>
<polygon points="162.0,342.0 163.3,344.6 172.2,345.9 181.2,354.8 187.6,362.4 188.8,370.0 181.2,360.0 187.6,368.9 192.7,383.6 200.3,390.6 200.3,396.4 183.7,398.3 172.2,401.5 162.0,400.8 161.4,393.2 158.2,385.5 151.2,380.4 151.8,379.1 155.7,374.7 152.5,371.5 151.8,361.9 151.8,362.4 153.1,351.0 162.0,347.1" fill="#bcbcbc" stroke="#000" stroke-width="1" stroke-linejoin="round"/>
<polygon points="162.0,335.7 167.1,331.8 168.4,333.1 177.3,336.9 187.6,334.4 201.6,339.5 215.0,339.5 216.9,342.0 224.5,351.0 219.4,357.3 213.1,362.4 204.1,370.0 216.9,360.0 210.5,365.1 204.1,371.5 200.3,376.6 200.3,390.6 192.7,383.6 187.6,368.9 181.2,360.0 188.8,370.0 187.6,362.4 181.2,354.8 172.2,345.9 163.3,344.6 162.0,342.0" fill="#bcbcbc" stroke="#000" stroke-width="1" stroke-linejoin="round"/>
<polygon points="215.0,339.5 216.9,330.6 220.1,324.2 224.5,321.6 230.9,324.2 238.6,319.1 243.7,315.3 247.5,308.9 251.3,306.3 260.0,305.1 261.4,303.8 267.8,305.7 269.0,316.6 270.3,324.2 265.2,331.9 255.0,338.2 255.0,349.1 253.9,358.0 244.9,358.6 243.7,349.7 224.5,351.0 216.9,342.0" fill="#bcbcbc" stroke="#000" stroke-width="1" stroke-linejoin="round"/>
<polygon points="224.5,351.0 243.7,349.7 244.9,358.6 253.9,358.0 244.9,360.0 243.7,372.8 244.9,383.0 213.1,386.8 200.3,390.6 200.3,376.6 204.1,371.5 210.5,365.1 216.9,360.0 204.1,370.0 213.1,362.4 219.4,357.3" fill="#bcbcbc" stroke="#000" stroke-width="1" stroke-linejoin="round"/>
<polygon points="255.0,273.8 263.9,269.3 266.5,264.9 274.1,262.3 286.9,261.1 292.6,259.1 303.5,259.1 311.1,267.4 317.5,273.2 321.3,282.1 324.5,285.9 317.5,289.1 317.5,293.6 316.2,292.9 306.0,292.9 297.1,294.9 289.4,293.6 285.0,305.1 279.2,303.8 270.3,304.4 267.8,305.7 261.4,303.8 260.1,301.2 258.8,291.0 257.6,282.1 255.0,279.6" fill="#bcbcbc" stroke="#000" stroke-width="1" stroke-linejoin="round"/>
<polygon points="303.5,259.1 308.6,250.2 312.4,247.0 318.8,246.4 324.5,244.5 331.6,245.7 337.9,252.8 344.3,259.1 346.9,265.5 349.4,270.0 348.8,275.1 353.2,280.8 344.3,281.5 339.2,285.3 334.1,282.7 327.7,283.4 324.5,285.9 321.3,282.1 317.5,273.2 311.1,267.4" fill="#bcbcbc" stroke="#000" stroke-width="1" stroke-linejoin="round"/>
<polygon points="317.5,289.1 324.5,285.9 327.7,283.4 334.1,282.7 339.2,285.3 344.3,281.5 353.2,280.8 360.9,285.9 362.2,291.0 367.3,293.6 371.1,300.0 374.9,303.8 382.6,308.9 383.2,316.6 378.8,316.6 374.9,315.3 371.1,312.7 364.7,310.8 363.4,315.3 346.9,315.9 344.3,312.7 346.9,309.5 345.6,306.3 341.8,303.8 332.8,307.0 324.5,302.5 317.5,293.6" fill="#f9fbfc" stroke="#000" stroke-width="1" stroke-linejoin="round"/>
<polygon points="285.0,305.1 289.4,293.6 297.1,294.9 306.0,292.9 316.2,292.9 317.5,293.6 324.5,302.5 332.8,307.0 341.8,303.8 345.6,306.3 346.9,309.5 344.3,312.7 346.9,315.9 346.9,321.7 334.1,319.7 323.9,324.2 311.1,326.8 298.4,328.0 292.0,326.8 288.8,316.6 293.3,314.0 286.9,306.3" fill="#bcbcbc" stroke="#000" stroke-width="1" stroke-linejoin="round"/>
<polygon points="346.9,315.9 363.4,315.3 364.7,310.8 371.1,312.7 374.9,315.3 378.8,316.6 383.2,316.6 387.7,322.9 389.0,335.7 385.1,345.9 385.1,353.5 376.2,352.3 369.8,353.5 364.7,352.3 363.4,358.7 359.6,352.3 358.3,342.1 352.0,329.3 349.4,321.7 346.9,321.7" fill="#bcbcbc" stroke="#000" stroke-width="1" stroke-linejoin="round"/>
<polygon points="298.4,328.0 311.1,326.8 323.9,324.2 334.1,319.7 346.9,321.7 349.4,321.7 352.0,329.3 358.3,342.1 359.6,352.3 352.0,351.0 344.3,353.5 334.1,356.1 326.4,356.1 322.6,359.3 316.2,358.7 309.9,348.4 306.0,342.1 298.4,338.2 299.7,331.9" fill="#bcbcbc" stroke="#000" stroke-width="1" stroke-linejoin="round"/>
<polygon points="267.8,305.7 270.3,304.4 279.2,303.8 285.0,305.1 286.9,306.3 293.3,314.0 288.8,316.6 292.0,326.8 298.4,328.0 299.7,331.9 298.4,338.2 306.0,342.1 309.9,348.4 306.0,353.5 297.1,354.8 289.4,351.0 288.2,345.9 280.5,348.4 276.7,354.8 265.2,354.8 260.1,349.7 255.0,349.1 255.0,338.2 265.2,331.9 270.3,324.2 269.0,316.6" fill="#bcbcbc" stroke="#000" stroke-width="1" stroke-linejoin="round"/>
<polygon points="244.9,358.6 253.9,358.0 255.0,349.1 260.1,349.7 265.2,354.8 276.7,354.8 279.2,362.5 280.5,370.0 279.2,360.0 281.8,370.2 289.4,375.3 298.4,379.1 303.5,384.2 303.5,386.8 293.3,388.1 278.0,389.3 271.6,391.9 270.3,391.9 262.7,384.9 255.0,384.2 260.0,384.2 244.9,383.0 243.7,372.8 244.9,360.0 244.9,358.6" fill="#ffffff" stroke="#000" stroke-width="1" stroke-linejoin="round"/>
<polygon points="276.7,354.8 280.5,348.4 288.2,345.9 289.4,351.0 297.1,354.8 306.0,353.5 309.9,348.4 316.2,358.7 315.0,370.0 315.0,360.0 316.2,374.0 303.5,384.2 298.4,379.1 289.4,375.3 281.8,370.2 279.2,360.0 280.5,370.0 279.2,362.5" fill="#bcbcbc" stroke="#000" stroke-width="1" stroke-linejoin="round"/>
<polygon points="316.2,358.7 322.6,359.3 326.4,356.1 334.1,356.1 344.3,353.5 352.0,351.0 359.6,352.3 349.4,357.4 350.7,366.3 352.0,370.0 349.4,360.0 352.0,367.7 360.9,376.6 363.4,385.5 359.6,391.9 344.3,388.1 330.3,383.6 316.2,374.0 315.0,360.0 315.0,370.0" fill="#f9fbfc" stroke="#000" stroke-width="1" stroke-linejoin="round"/>
<polygon points="349.4,357.4 359.6,352.3 363.4,358.7 364.7,352.3 369.8,353.5 376.2,352.3 385.1,353.5 386.4,370.0 386.4,360.0 385.1,367.7 389.0,372.8 386.4,381.7 390.2,388.1 383.9,390.6 382.6,390.6 363.4,385.5 360.9,376.6 352.0,367.7 349.4,360.0 352.0,370.0 350.7,366.3" fill="#ffffff" stroke="#000" stroke-width="1" stroke-linejoin="round"/>
<polygon points="162.0,400.8 172.2,401.5 183.7,398.3 200.3,396.4 210.5,398.3 209.2,407.2 206.7,413.6 206.7,431.4 201.6,435.3 192.7,436.5 187.6,434.0 174.8,428.9 172.2,425.1 169.7,416.1 159.5,408.5 156.9,404.6" fill="#bcbcbc" stroke="#000" stroke-width="1" stroke-linejoin="round"/>
<polygon points="200.3,390.6 213.1,386.8 244.9,383.0 238.6,388.1 237.3,398.3 236.7,418.7 229.6,422.5 228.4,431.4 229.6,436.5 210.5,439.7 206.7,431.4 206.7,413.6 209.2,407.2 210.5,398.3 200.3,396.4" fill="#ffffff" stroke="#000" stroke-width="1" stroke-linejoin="round"/>
<polygon points="244.9,383.0 260.0,384.2 255.0,384.2 262.7,384.9 270.3,391.9 271.6,391.9 270.3,398.3 264.6,404.7 266.5,428.9 269.0,442.9 255.0,446.8 260.0,446.7 247.5,446.7 246.2,428.9 238.6,423.8 236.7,418.7 237.3,398.3 238.6,388.1" fill="#eef3f5" stroke="#000" stroke-width="1" stroke-linejoin="round"/>
<polygon points="229.6,436.5 228.4,431.4 229.6,422.5 236.7,418.7 238.6,423.8 246.2,428.9 247.5,446.7 251.3,448.0 251.3,462.0 242.4,467.1 247.5,477.3 246.2,480.5 228.4,482.4 219.4,481.2 225.8,469.7 222.0,464.6 225.8,456.9 210.5,441.6 210.5,439.7" fill="#ffffff" stroke="#000" stroke-width="1" stroke-linejoin="round"/>
<polygon points="251.3,448.0 260.0,446.7 255.0,446.8 270.3,442.9 278.0,441.7 280.5,448.0 288.2,451.9 285.6,462.1 289.4,481.2 284.3,483.8 275.4,486.3 255.0,483.8 260.0,481.8 248.8,480.5 246.2,480.5 247.5,477.3 242.4,467.1 251.3,462.0" fill="#eef3f5" stroke="#000" stroke-width="1" stroke-linejoin="round"/>
<polygon points="192.7,436.5 201.6,435.3 206.7,431.4 210.5,439.7 210.5,441.6 225.8,456.9 222.0,464.6 225.8,469.7 219.4,481.2 200.3,476.1 182.4,474.8 168.4,476.1 168.4,467.1 173.5,464.6 174.8,459.5 178.6,458.2 179.9,449.3 183.7,446.7 183.1,441.6 186.3,439.1" fill="#f9fbfc" stroke="#000" stroke-width="1" stroke-linejoin="round"/>
<polygon points="155.0,411.0 159.5,408.5 169.7,416.1 172.2,425.1 174.8,428.9 187.6,434.0 192.7,436.5 186.3,439.1 183.1,441.6 183.7,446.7 179.9,449.3 178.6,458.2 174.8,459.5 173.5,462.0 159.5,454.4 153.1,448.0 153.1,440.4 163.3,437.8 164.6,435.3 156.9,434.0 153.1,430.2 146.7,431.4 137.8,441.6 132.7,435.3 136.5,433.3 137.2,430.2 139.1,425.1 141.6,425.1 146.7,427.0 149.3,425.1 153.8,418.7" fill="#f9fbfc" stroke="#000" stroke-width="1" stroke-linejoin="round"/>
<polygon points="303.5,384.2 316.2,374.0 330.3,383.6 344.3,388.1 359.6,391.9 354.5,400.8 344.3,403.4 352.0,411.0 353.2,417.4 349.4,423.8 326.4,422.5 323.9,413.6 316.2,403.4 308.6,398.3 303.5,386.8" fill="#f9fbfc" stroke="#000" stroke-width="1" stroke-linejoin="round"/>
<polygon points="363.4,385.5 382.6,390.6 383.9,390.6 385.1,398.3 392.8,404.7 390.2,408.5 389.0,420.0 377.5,422.5 349.4,423.8 353.2,417.4 352.0,411.0 344.3,403.4 354.5,400.8 359.6,391.9" fill="#ffffff" stroke="#000" stroke-width="1" stroke-linejoin="round"/>
<polygon points="390.2,388.1 400.4,394.4 413.2,398.3 418.3,393.2 438.7,384.2 450.2,388.1 457.9,402.1 455.3,413.6 443.8,420.0 429.8,423.8 408.1,428.9 395.3,422.5 389.0,421.2 378.8,421.2 389.0,420.0 390.2,408.5 392.8,404.7 385.1,398.3 383.9,390.6" fill="#ffffff" stroke="#000" stroke-width="1" stroke-linejoin="round"/>
<polygon points="278.0,390.6 293.3,388.1 303.5,386.8 308.6,398.3 316.2,403.4 323.9,413.6 326.4,422.5 312.4,426.3 298.4,426.3 293.3,421.2 286.9,413.6 280.5,402.1" fill="#eef3f5" stroke="#000" stroke-width="1" stroke-linejoin="round"/>
<polygon points="271.6,391.9 278.0,390.6 280.5,402.1 286.9,413.6 293.3,421.2 298.4,426.3 297.1,436.6 293.3,439.1 278.0,441.7 269.0,442.9 266.5,428.9 264.6,404.7 270.3,398.3" fill="#eef3f5" stroke="#000" stroke-width="1" stroke-linejoin="round"/>
<polygon points="298.4,427.0 312.4,426.3 313.7,435.3 317.5,441.7 311.1,451.9 307.3,452.5 302.2,448.0 294.6,442.9 297.1,436.6" fill="#5097a8" stroke="#000" stroke-width="1" stroke-linejoin="round"/>
<polygon points="312.4,426.3 326.4,422.5 349.4,423.8 377.5,422.5 387.7,436.6 382.6,448.0 374.9,439.1 346.9,438.5 329.0,435.3 317.5,436.6 313.7,435.3" fill="#e2ebee" stroke="#000" stroke-width="1" stroke-linejoin="round"/>
<polygon points="317.5,436.6 329.0,435.3 346.9,438.5 374.9,439.1 381.3,448.0 367.3,451.9 354.5,455.7 334.1,458.2 317.5,462.1 318.8,455.7 311.1,451.9 317.5,441.7" fill="#e2ebee" stroke="#000" stroke-width="1" stroke-linejoin="round"/>
<polygon points="278.0,441.7 293.3,439.1 302.2,448.0 307.3,452.5 311.1,451.9 318.8,455.7 317.5,462.1 303.5,472.3 289.4,481.2 285.6,462.1 288.2,451.9 280.5,448.0" fill="#d0e3e7" stroke="#000" stroke-width="1" stroke-linejoin="round"/>
<polygon points="378.8,422.5 389.0,421.2 400.4,426.3 408.1,429.5 415.8,425.1 428.5,424.4 420.9,436.6 411.9,448.0 409.4,451.9 413.2,460.8 414.5,471.0 411.9,476.1 401.7,474.8 390.2,472.3 385.1,464.6 374.9,464.6 360.9,462.1 354.5,455.7 364.7,454.4 369.8,450.6 382.6,449.3 389.0,442.9 389.0,435.3 382.6,427.6" fill="#ffffff" stroke="#ff0000" stroke-width="2.6" stroke-linejoin="round"/>
</svg>
<div class="t b" style="left:187px;top:226px;font-size:12px;color:#111;letter-spacing:1px">Repartizare teritoriala</div>
<div class="a" style="left:225px;top:501px;width:75px;height:22px;background:rgba(0,0,0,0.8);filter:blur(0.6px)"></div>
<div class="a" style="left:222px;top:498px;width:75px;height:22px;background:#e8e2d0;border:1px solid #f4f0e4"></div>
<svg width="30" height="20" style="left:226px;top:500px">
<circle cx="7" cy="10" r="5" fill="#f4f4f4" stroke="#999" stroke-width="1"/>
<rect x="15.5" y="4.5" width="11" height="11" fill="#e8e2d0" stroke="#222" stroke-width="1"/>
</svg>
<div class="t" style="left:261px;top:503px;font-size:12px;color:#111">Marfa</div>
<div class="t b" style="left:207px;top:531px;font-size:12px;color:#111;letter-spacing:0.75px;text-decoration:underline">TOTAL General</div>
<div class="a" style="left:417px;top:462px;width:118px;height:82px;background:#fff;border:1px solid #808080"></div>
<div class="t b" style="left:428px;top:474px;font-size:11px;color:#111">Judet CT</div>
<div class="a" style="left:428px;top:486px;width:84px;height:1px;background:#111"></div>
<div class="t b" style="left:428px;top:499px;font-size:11.5px;color:#111;letter-spacing:0.45px">Marfa = 14.762</div>

<!-- WINDOW BOTTOM TOOLBAR -->
<svg width="1907" height="40" style="left:0;top:915px">
  <defs>
    <linearGradient id="btng" x1="0" y1="0" x2="0" y2="1"><stop offset="0" stop-color="#f4f2ea"/><stop offset="1" stop-color="#d8d4c4"/></linearGradient>
    <radialGradient id="hq2" cx="0.4" cy="0.35" r="0.7"><stop offset="0" stop-color="#ffd15a"/><stop offset="0.6" stop-color="#f0a020"/><stop offset="1" stop-color="#c87010"/></radialGradient>
  </defs>
  <polygon points="44,5 50,5 47,8" fill="#101080"/>
  <path d="M45,10 v20 M48,11 v20" stroke="#777" stroke-width="1" stroke-dasharray="1,2"/>
  <rect x="56" y="10" width="47" height="23" fill="url(#btng)" stroke="#a8a498" stroke-width="1"/>
  <!-- pie -->
  <ellipse cx="123" cy="25.5" rx="14" ry="6.5" fill="#111" opacity="0.8"/>
  <ellipse cx="122.5" cy="24.5" rx="13.5" ry="6" fill="#1a5a8a"/>
  <rect x="109" y="19" width="27" height="5.5" fill="#1a5a8a"/>
  <ellipse cx="122.5" cy="19" rx="13.5" ry="6" fill="#2a8ccc"/>
  <path d="M122.5,19 L127,12.5 Q135,14 136,19 L136,22 L134,23z" fill="#e07838"/>
  <polygon points="118,10.5 127,8.5 129,13 123,19 119,14" fill="#f4dc48" stroke="#c8a828" stroke-width="0.5"/>
  <!-- tiles -->
  <g>
  <rect x="146" y="12" width="24.5" height="22" rx="1.5" fill="#111"/>
  <rect x="144.5" y="10.5" width="24.5" height="22" rx="1.5" fill="#fafafa" stroke="#ccc" stroke-width="0.5"/>
  <path d="M146,15 H167 M146,20 H167 M146,25 H167" stroke="#ddd" stroke-width="0.6"/>
  <rect x="146.5" y="19" width="4.5" height="13" fill="#2a9a3a"/>
  <rect x="154" y="12" width="4.5" height="20" fill="#30a0e0"/>
  <rect x="161.5" y="16" width="4.5" height="16" fill="#a03898"/>
  </g>
  <g>
  <rect x="180" y="12" width="24" height="22" rx="1.5" fill="#111"/>
  <rect x="178.5" y="10.5" width="24" height="22" rx="1.5" fill="#fafafa" stroke="#ccc" stroke-width="0.5"/>
  <rect x="180.5" y="13" width="16" height="4.5" rx="1" fill="#a03890"/>
  <rect x="180.5" y="19.5" width="20" height="4.5" rx="1" fill="#2a88d8"/>
  <rect x="180.5" y="26" width="12" height="4.5" rx="1" fill="#2a8a3a"/>
  </g>
  <g>
  <rect x="214" y="12" width="24" height="22" rx="1.5" fill="#111"/>
  <rect x="212.5" y="10.5" width="24" height="22" rx="1.5" fill="#fafafa" stroke="#ccc" stroke-width="0.5"/>
  <polygon points="212.5,32 212.5,16 217,20 223,14 229,22 236,17 236,32" fill="#50c030"/>
  <polygon points="212.5,32 212.5,24 218,19 222,26 225,13 229,27 234,23 236,28 236,32" fill="#2a78d8"/>
  </g>
  <g>
  <rect x="247.5" y="12" width="24" height="22" rx="1.5" fill="#111"/>
  <rect x="246" y="10.5" width="24" height="22" rx="1.5" fill="#fafafa" stroke="#ccc" stroke-width="0.5"/>
  <path d="M247,13 L257,21 L263,17 L269,23 L269,32" fill="none" stroke="#30a0e8" stroke-width="1.2"/>
  <path d="M247,31 L249,23 L253,26 L258,13 L261,24 L265,19 L268,30 L247,31" fill="none" stroke="#f09030" stroke-width="1.4"/>
  </g>
  <g>
  <rect x="281" y="12" width="24" height="22" rx="1.5" fill="#111"/>
  <rect x="279.5" y="10.5" width="24" height="22" rx="1.5" fill="#fafafa" stroke="#ccc" stroke-width="0.5"/>
  <path d="M280,15 H303 M280,20 H303 M280,25 H303 M284,11 V32 M289,11 V32 M294,11 V32 M299,11 V32" stroke="#e4e4e4" stroke-width="0.6"/>
  <circle cx="284" cy="17.5" r="1.1" fill="#e8d020"/><circle cx="287" cy="21.5" r="1.1" fill="#e8d020"/><circle cx="293" cy="19.5" r="1.1" fill="#e02020"/><circle cx="299" cy="16.5" r="1.1" fill="#e02020"/><circle cx="296" cy="22.5" r="1.1" fill="#e8d020"/><circle cx="290" cy="25.5" r="1.1" fill="#e02020"/><circle cx="282" cy="27" r="1.1" fill="#2090e0"/><circle cx="298" cy="28.5" r="1.1" fill="#40c030"/>
  </g>
  <!-- checkbox 3D -->
  <defs><linearGradient id="cbg" x1="0" y1="0" x2="1" y2="1"><stop offset="0" stop-color="#fff"/><stop offset="1" stop-color="#c4c4c4"/></linearGradient>
  <linearGradient id="flg" x1="0" y1="0" x2="0" y2="1"><stop offset="0" stop-color="#b8b8b8"/><stop offset="1" stop-color="#888"/></linearGradient></defs>
  <rect x="322.5" y="14.5" width="15" height="15.5" fill="url(#cbg)" stroke="#333" stroke-width="1"/>
  <path d="M325,22.5 L329,27.5 L335.5,17" fill="none" stroke="#000" stroke-width="2.2"/>
  <text x="339" y="26.5" font-family="Liberation Sans" font-weight="bold" font-size="11.5" fill="#f01010">3D</text>
  <!-- help -->
  <circle cx="371.8" cy="22" r="12.5" fill="#fafafa" stroke="#999" stroke-width="0.8"/>
  <circle cx="371.8" cy="22" r="10.3" fill="url(#hq2)" stroke="#b06010" stroke-width="0.5"/>
  <text x="371.8" y="28" font-family="Liberation Sans" font-weight="bold" font-size="15" fill="#fff" text-anchor="middle">?</text>
  <!-- ruler -->
  <rect x="390" y="11" width="23" height="23" fill="#f0f0f0" stroke="#555" stroke-width="0.6"/>
  <path d="M389,11 h3 M390.5,9.5 v3 M411,34 h3 M412.5,32.5 v3 M389,34 h3 M390.5,32.5 v3" stroke="#2a5a7a" stroke-width="1"/>
  <polygon points="391,12 391,32 411,32" fill="#28a8e0" stroke="#106090" stroke-width="0.6"/>
  <polygon points="394.5,22 394.5,29 401.5,29" fill="#f0f0f0"/>
  <path d="M402,22 L413,11" stroke="#222" stroke-width="2.6"/>
  <path d="M402,22 L413,11" stroke="#f0d020" stroke-width="1.6"/>
  <!-- floppy -->
  <path d="M422.5,10 H446 L449.5,13.5 V34 H422.5z" fill="url(#flg)" stroke="#222" stroke-width="1"/>
  <rect x="428" y="10.5" width="15" height="8.5" fill="#e8e8e8" stroke="#666" stroke-width="0.5"/>
  <rect x="437.5" y="11.5" width="3" height="5.5" fill="#777"/>
  <rect x="425.5" y="21.5" width="21" height="11.5" fill="#f4f4f4"/>
  <rect x="425.5" y="21.5" width="21" height="2.5" fill="#111"/>
  <rect x="425.5" y="24" width="21" height="2" fill="#28b0e0"/>
  <!-- line chart -->
  <rect x="459.5" y="10" width="25.5" height="23.5" fill="#fafafa" stroke="#111" stroke-width="2"/>
  <path d="M462,31 L469,21 L475,29 L482,15" fill="none" stroke="#222" stroke-width="1"/>
  <path d="M462,31 l1.5,-1.5 l1.5,1.5 l-1.5,1.5z M469,21 l1.5,-1.5 l1.5,1.5 l-1.5,1.5z M475,29 l1.5,-1.5 l1.5,1.5 l-1.5,1.5z M482,15 l1.5,-1.5 l1.5,1.5 l-1.5,1.5z" fill="#20a0e8" stroke="#20a0e8" stroke-width="1.5" transform="translate(-1.5,0)"/>
</svg>
<div class="a" style="left:493px;top:926px;width:180px;height:22px;background:#cfcfcf"></div>
<div class="t b" style="left:497px;top:930px;font-size:13px;color:#111">MyPalette</div>
<div class="a" style="left:656px;top:926px;width:17px;height:22px;background:#f4f4f4;border:1px solid #888"></div>
<svg width="10" height="6" style="left:660px;top:935px"><polygon points="0,0 8,0 4,4" fill="#111"/></svg>
<!-- right icons -->
<svg width="280" height="45" style="left:1630px;top:915px">
  <defs>
    <radialGradient id="rl" cx="0.4" cy="0.35" r="0.6"><stop offset="0" stop-color="#ffb0b0"/><stop offset="0.5" stop-color="#e02020"/><stop offset="1" stop-color="#901010"/></radialGradient>
    <linearGradient id="hand" x1="0" y1="0" x2="0" y2="1"><stop offset="0" stop-color="#fde0c8"/><stop offset="1" stop-color="#e8a888"/></linearGradient>
  </defs>
  <!-- pen hand -->
  <path d="M11,29 Q12,21 19,18 L29,18 L30,28 Q25,31 18,30 Q14,31 11,29z" fill="url(#hand)" stroke="#a06848" stroke-width="0.7"/>
  <path d="M28.5,17.5 H34.5 V29 H29.5z" fill="#3a3a3a"/>
  <path d="M8.5,30.5 L28,11.5" stroke="#8a1010" stroke-width="2.8" stroke-linecap="round"/>
  <path d="M8.5,30.5 L28,11.5" stroke="#e83030" stroke-width="1.6"/>
  <path d="M7.5,32 L9.5,29.5" stroke="#f0d090" stroke-width="1.6"/>
  <!-- traffic light -->
  <rect x="49" y="9.5" width="16" height="3" fill="#333"/>
  <rect x="49" y="19" width="16" height="2.5" fill="#333"/>
  <rect x="49" y="28" width="16" height="2.5" fill="#333"/>
  <rect x="51.5" y="9" width="11" height="24.5" rx="1" fill="#3a3a3a"/>
  <circle cx="57" cy="14.5" r="3.7" fill="url(#rl)"/>
  <circle cx="57" cy="22.5" r="3.7" fill="#8a8430"/>
  <circle cx="57" cy="30" r="3.4" fill="#4a6a28"/>
  <!-- hexagon -->
  <polygon points="86,10 100,10 107,21.7 100,33.4 86,33.4 79.3,21.7" fill="#222"/>
  <polygon points="87,12 93,21.7 81.5,21.7" fill="#e01818"/>
  <polygon points="87,12 99,12 93,21.7" fill="#f0a028"/>
  <polygon points="99,12 104.8,21.7 93,21.7" fill="#f4e818"/>
  <polygon points="104.8,21.7 99,31.5 93,21.7" fill="#28b828"/>
  <polygon points="99,31.5 87,31.5 93,21.7" fill="#1a78e0"/>
  <polygon points="87,31.5 81.5,21.7 93,21.7" fill="#9040d0"/>
  <!-- fan -->
  <path d="M116.5,21 Q130,5 145,20 L131,30z" fill="#222"/>
  <path d="M118,20.5 L131,29 L121,15z" fill="#e02030"/>
  <path d="M121,15 L131,29 L125,12z" fill="#f0a020"/>
  <path d="M125,12 L131,29 L129,11z" fill="#f0e020"/>
  <path d="M129,11 L131,29 L133.5,11z" fill="#40c040"/>
  <path d="M133.5,11 L131,29 L138,13z" fill="#20a0a0"/>
  <path d="M138,13 L131,29 L141.5,16z" fill="#2060d0"/>
  <path d="M141.5,16 L131,29 L144,20z" fill="#a040c0"/>
  <path d="M123,25 Q131,17 139,25 L131,30z" fill="#d8d8d8"/>
  <circle cx="131" cy="26.5" r="1.8" fill="#222"/>
  <!-- printer -->
  <polygon points="164,11 175,9.5 177,14 166,16" fill="#f4f4f4" stroke="#555" stroke-width="0.6"/>
  <polygon points="153.5,17 170,13.5 180.5,17 180.5,26 166,32 153.5,27" fill="#f6f6f6" stroke="#444" stroke-width="0.9"/>
  <path d="M153.5,19.5 L166,22 L180.5,17.5" fill="none" stroke="#20a020" stroke-width="1.3"/>
  <polygon points="155,26 165,23 170,26 160,29" fill="#ddd" stroke="#777" stroke-width="0.5"/>
  <path d="M166,22 V32" stroke="#aaa" stroke-width="0.6"/>
  <!-- floppy -->
  <path d="M196,11 H214 L217,14 V32 H196z" fill="#9a9a9a" stroke="#333" stroke-width="0.9"/>
  <rect x="200" y="11.5" width="12" height="7" fill="#e8e8e8" stroke="#666" stroke-width="0.4"/>
  <rect x="208" y="12.5" width="2.5" height="4.5" fill="#666"/>
  <rect x="198.5" y="21" width="16" height="10" fill="#f0f0f0"/>
  <rect x="198.5" y="21" width="16" height="2" fill="#30b0e0"/>
  <path d="M189,18 H195 V15 L201,21.5 L195,28 V25 H189z" fill="#20a8e8" stroke="#10608a" stroke-width="0.5"/>
  <!-- list -->
  <rect x="229" y="11.5" width="26" height="23" fill="#111"/>
  <rect x="227.5" y="10" width="26" height="23" fill="#fafafa" stroke="#222" stroke-width="1.2"/>
  <path d="M230.5,14.5 h3 M230.5,18 h3 M230.5,21.5 h3 M230.5,25 h3 M230.5,28.5 h3" stroke="#d81818" stroke-width="1.8"/>
  <path d="M236,14.5 h14.5 M236,18 h14.5 M236,21.5 h14.5 M236,25 h14.5 M236,28.5 h14.5" stroke="#999" stroke-width="1.1"/>
  <path d="M231,41 H264.5 V7.5" fill="none" stroke="#222" stroke-width="1.2"/>
</svg>
<div class="t" style="left:56px;top:931px;width:47px;text-align:center;font-size:12px;color:#1a3a8a">Date</div>

<!-- CALC ROW + STATUS -->
<div class="a" style="left:0;top:952px;width:31px;height:12px;background:#000"></div>
<div class="a" style="left:0;top:963px;width:1907px;height:56px;background:#d6d2c6"></div>
<div class="a" style="left:1902px;top:963px;width:5px;height:0px;background:#d6d2c6"></div>
<div class="a" style="left:-9px;top:968px;width:27.5px;height:26px;background:linear-gradient(#ebe7da,#d8d3c3);border-right:2px solid #a8a498;border-bottom:1px solid #b8b4a8"></div>
<div class="t b" style="left:-9px;top:975px;width:25.5px;text-align:center;font-size:13px;color:#111">0</div>
<div class="a" style="left:18.5px;top:968px;width:27.5px;height:26px;background:linear-gradient(#ebe7da,#d8d3c3);border-right:2px solid #a8a498;border-bottom:1px solid #b8b4a8"></div>
<div class="t b" style="left:18.5px;top:975px;width:25.5px;text-align:center;font-size:13px;color:#111">1</div>
<div class="a" style="left:46px;top:968px;width:25.700000000000003px;height:26px;background:linear-gradient(#ebe7da,#d8d3c3);border-right:2px solid #a8a498;border-bottom:1px solid #b8b4a8"></div>
<div class="t b" style="left:46px;top:975px;width:23.700000000000003px;text-align:center;font-size:13px;color:#111">2</div>
<div class="a" style="left:71.7px;top:968px;width:27.299999999999997px;height:26px;background:linear-gradient(#ebe7da,#d8d3c3);border-right:2px solid #a8a498;border-bottom:1px solid #b8b4a8"></div>
<div class="t b" style="left:71.7px;top:975px;width:25.299999999999997px;text-align:center;font-size:13px;color:#111">3</div>
<div class="a" style="left:99px;top:968px;width:26.700000000000003px;height:26px;background:linear-gradient(#ebe7da,#d8d3c3);border-right:2px solid #a8a498;border-bottom:1px solid #b8b4a8"></div>
<div class="t b" style="left:99px;top:975px;width:24.700000000000003px;text-align:center;font-size:13px;color:#111">4</div>
<div class="a" style="left:125.7px;top:968px;width:27.299999999999997px;height:26px;background:linear-gradient(#ebe7da,#d8d3c3);border-right:2px solid #a8a498;border-bottom:1px solid #b8b4a8"></div>
<div class="t b" style="left:125.7px;top:975px;width:25.299999999999997px;text-align:center;font-size:13px;color:#111">5</div>
<div class="a" style="left:153px;top:968px;width:26px;height:26px;background:linear-gradient(#ebe7da,#d8d3c3);border-right:2px solid #a8a498;border-bottom:1px solid #b8b4a8"></div>
<div class="t b" style="left:153px;top:975px;width:24px;text-align:center;font-size:13px;color:#111">6</div>
<div class="a" style="left:179px;top:968px;width:27px;height:26px;background:linear-gradient(#ebe7da,#d8d3c3);border-right:2px solid #a8a498;border-bottom:1px solid #b8b4a8"></div>
<div class="t b" style="left:179px;top:975px;width:25px;text-align:center;font-size:13px;color:#111">7</div>
<div class="a" style="left:206px;top:968px;width:27px;height:26px;background:linear-gradient(#ebe7da,#d8d3c3);border-right:2px solid #a8a498;border-bottom:1px solid #b8b4a8"></div>
<div class="t b" style="left:206px;top:975px;width:25px;text-align:center;font-size:13px;color:#111">8</div>
<div class="a" style="left:233px;top:968px;width:26px;height:26px;background:linear-gradient(#ebe7da,#d8d3c3);border-right:2px solid #a8a498;border-bottom:1px solid #b8b4a8"></div>
<div class="t b" style="left:233px;top:975px;width:24px;text-align:center;font-size:13px;color:#111">9</div>
<div class="a" style="left:259px;top:968px;width:27px;height:26px;background:linear-gradient(#ebe7da,#d8d3c3);border-right:2px solid #a8a498;border-bottom:1px solid #b8b4a8"></div>
<div class="t b" style="left:259px;top:975px;width:25px;text-align:center;font-size:13px;color:#111">.</div>
<div class="a" style="left:286px;top:968px;width:25px;height:26px;background:linear-gradient(#ebe7da,#d8d3c3);border-right:2px solid #a8a498;border-bottom:1px solid #b8b4a8"></div>
<div class="t b" style="left:286px;top:975px;width:23px;text-align:center;font-size:13px;color:#111">(</div>
<div class="a" style="left:311px;top:968px;width:24px;height:26px;background:linear-gradient(#ebe7da,#d8d3c3);border-right:2px solid #a8a498;border-bottom:1px solid #b8b4a8"></div>
<div class="t b" style="left:311px;top:975px;width:22px;text-align:center;font-size:13px;color:#111">)</div>
<div class="a" style="left:338px;top:971px;width:1183px;height:19px;background:#e8e3d3"></div>
<div class="a" style="left:1524px;top:968px;width:27px;height:26px;background:linear-gradient(#ebe7da,#d4cfbf);border:1px solid #a8a498"></div>
<div class="t b" style="left:1524px;top:974px;width:27px;text-align:center;font-size:13px;color:#111">=</div>
<div class="t b" style="left:1640px;top:973px;font-size:17px;font-family:'Liberation Serif',serif;color:#111">0</div>
<div class="a" style="left:1740px;top:968px;width:35px;height:26px;background:linear-gradient(#ebe7da,#d4cfbf);border-right:1px solid #a8a498;border-bottom:1px solid #a8a498"></div>
<div class="t" style="left:1740px;top:974px;width:35px;text-align:center;font-size:12px;color:#111">back</div>
<div class="a" style="left:1775px;top:968px;width:25px;height:26px;background:linear-gradient(#ebe7da,#d4cfbf);border-right:1px solid #a8a498;border-bottom:1px solid #a8a498"></div>
<div class="t b" style="left:1775px;top:972px;width:25px;text-align:center;font-size:16px;color:#111">C</div>
<div class="a" style="left:1800px;top:968px;width:26px;height:26px;background:linear-gradient(#e4e0d2,#d8d4c6);border-right:1px solid #a8a498;border-bottom:1px solid #a8a498"></div>
<div class="t" style="left:1800px;top:974px;width:26px;text-align:center;font-size:13px;color:#111">+</div>
<div class="a" style="left:1826px;top:968px;width:26px;height:26px;background:linear-gradient(#ebe7da,#d4cfbf);border-right:1px solid #a8a498;border-bottom:1px solid #a8a498"></div>
<div class="t" style="left:1826px;top:974px;width:26px;text-align:center;font-size:13px;color:#111">-</div>
<div class="a" style="left:1852px;top:968px;width:26px;height:26px;background:linear-gradient(#ebe7da,#d4cfbf);border-right:1px solid #a8a498;border-bottom:1px solid #a8a498"></div>
<div class="t" style="left:1855px;top:974px;width:26px;text-align:center;font-size:13px;color:#111">*</div>
<div class="a" style="left:1878px;top:968px;width:25px;height:26px;background:linear-gradient(#ebe7da,#d4cfbf);border-right:1px solid #a8a498;border-bottom:1px solid #a8a498"></div>
<div class="t" style="left:1882px;top:974px;width:25px;text-align:center;font-size:13px;color:#111">/</div>
<div class="a" style="left:0;top:1000px;width:115px;height:19px;background:linear-gradient(#e4e0d4,#d4d0c2);border-right:1px solid #b0ac9f;border-top:1px solid #ece8dc"></div>
<svg width="14" height="14" style="left:-5px;top:1003px"><circle cx="7" cy="7" r="5.5" fill="#e08a50" stroke="#fff" stroke-width="0.8"/></svg>
<div class="t b" style="left:11px;top:1003.5px;font-size:12.7px;color:#111">Task-uri noi</div>
<div class="a" style="left:121px;top:1000px;width:214px;height:19px;background:linear-gradient(#e4e0d4,#d4d0c2);border-right:1px solid #b0ac9f;border-left:1px solid #ece8dc;border-top:1px solid #ece8dc"></div>
<svg width="14" height="14" style="left:124px;top:1003px"><circle cx="6" cy="7" r="5" fill="#2a4aa8" stroke="#ccd" stroke-width="0.8"/></svg>
<div class="t b" style="left:140px;top:1002.5px;font-size:13.6px;color:#111">Versiunea 25,023 /2 64bit</div>
<div class="t" style="left:362px;top:1004px;font-size:12px;color:#111">Optiuni pe module</div>
<div class="t" style="left:1620px;top:1001px;font-size:10.6px;color:#111;text-decoration:underline">Speed Butoane</div>
<div class="a" style="left:1697px;top:998px;width:19px;height:21px;background:linear-gradient(#e8e4d8,#d8d4c6);border-right:1px solid #a8a498;border-left:1px solid #f0ece0"></div>
<div class="t b" style="left:1697px;top:1004px;width:19px;text-align:center;font-size:12px;color:#111">1</div>
<div class="a" style="left:1716px;top:998px;width:23px;height:21px;background:linear-gradient(#e8e4d8,#d8d4c6);border-right:1px solid #a8a498;border-left:1px solid #f0ece0"></div>
<div class="t b" style="left:1716px;top:1004px;width:23px;text-align:center;font-size:12px;color:#111">2</div>
<div class="a" style="left:1739px;top:998px;width:19px;height:21px;background:linear-gradient(#e8e4d8,#d8d4c6);border-right:1px solid #a8a498;border-left:1px solid #f0ece0"></div>
<div class="t b" style="left:1739px;top:1004px;width:19px;text-align:center;font-size:12px;color:#111">3</div>
<div class="t" style="left:1761px;top:1001px;font-size:10.7px;color:#111;text-decoration:underline">Smart Computer</div>
<div class="a" style="left:1843px;top:997px;width:31px;height:22px;background:linear-gradient(#dcd8ca,#e4e0d4);border-left:1px solid #a8a498;border-top:1px solid #a8a498"></div>
<div class="t b" style="left:1846px;top:1005.5px;width:31px;text-align:center;font-size:12px;color:#e01010">ON</div>
<div class="a" style="left:1874px;top:997px;width:33px;height:22px;background:linear-gradient(#e8e4d8,#d8d4c6);border-left:1px solid #f0ece0"></div>
<div class="t b" style="left:1874px;top:1005.5px;width:33px;text-align:center;font-size:12px;color:#111">OFF</div>

</body></html>
